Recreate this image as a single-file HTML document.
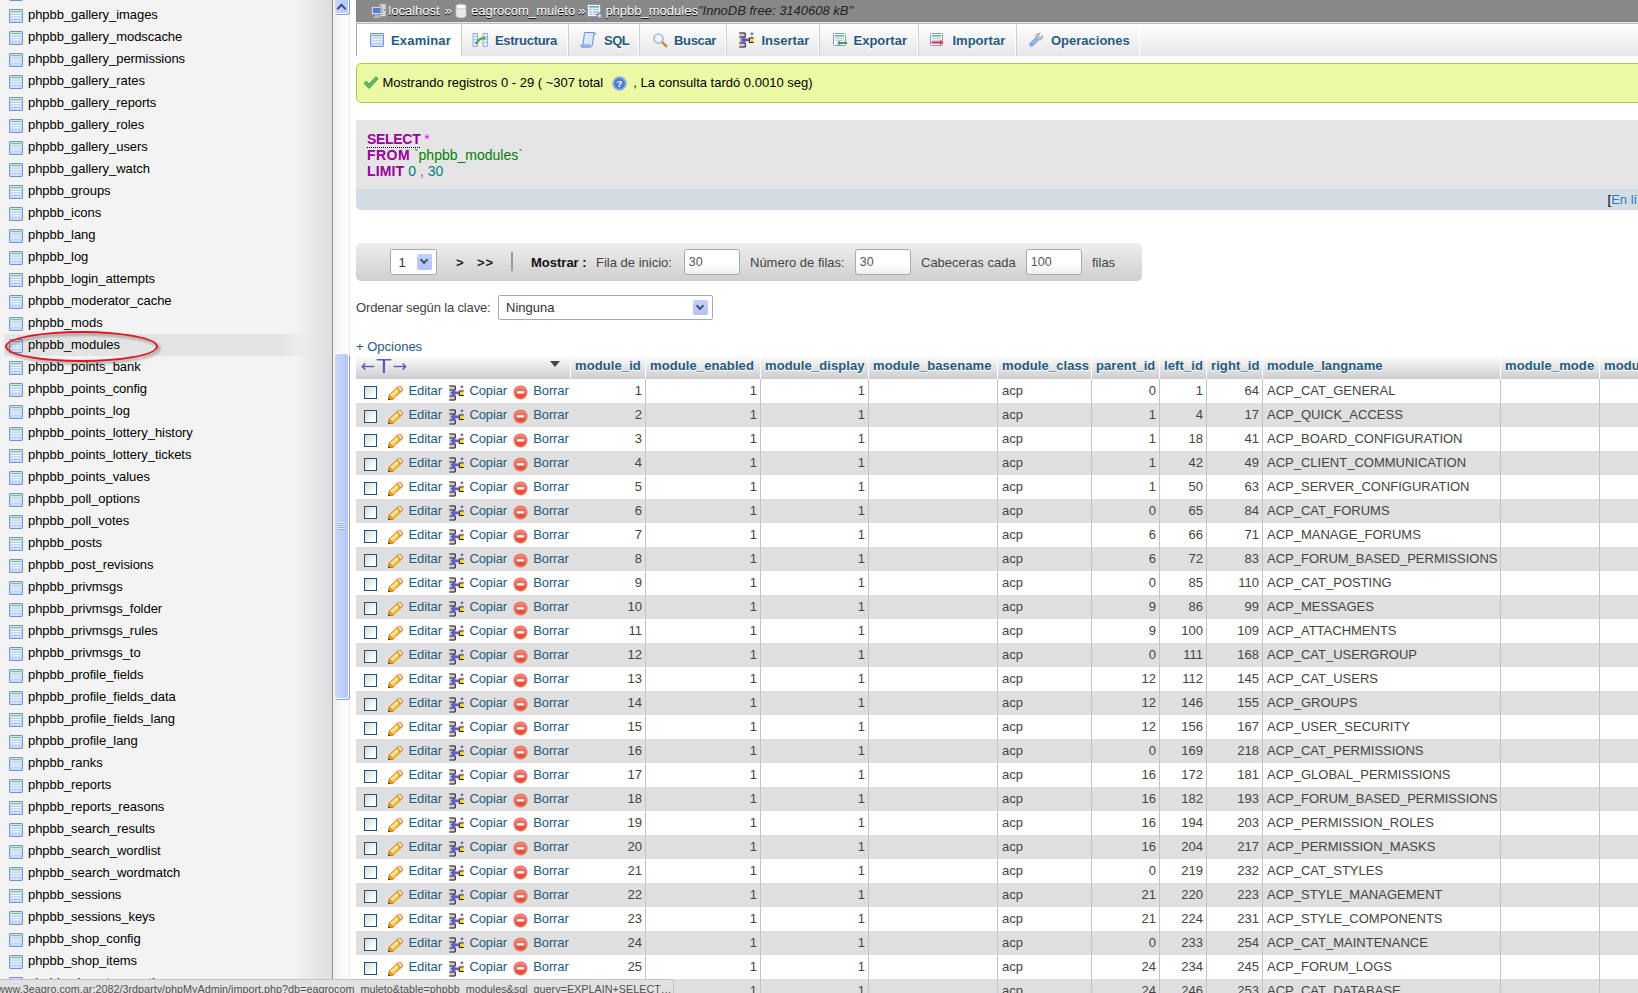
<!DOCTYPE html><html lang="es"><head><meta charset="utf-8"><title>phpMyAdmin</title><style>
*{box-sizing:border-box}
html,body{margin:0;padding:0}
body{width:1638px;height:993px;overflow:hidden;position:relative;background:#fff;font-family:"Liberation Sans",sans-serif;font-size:13px;color:#444;}
.ic{display:inline-block;vertical-align:middle}
/* left frame */
#left{position:absolute;left:0;top:0;width:332px;height:993px;background:#f3f3f3;overflow:hidden}
#left .grad{position:absolute;left:296px;top:0;width:36px;height:993px;background:linear-gradient(to right,#f3f3f3,#e6e7e8 50%,#dbddde)}
#left ul{list-style:none;margin:0;padding:0;position:absolute;left:0;top:-18px;width:332px}
#left li{height:22px;line-height:22px;padding-left:9px;letter-spacing:-.05px;white-space:nowrap;color:#000;position:relative}
#left li .ic{margin-right:5px;position:relative;top:.5px}
#left li.marked{background:linear-gradient(to right,rgba(228,228,228,0) 0,rgba(228,228,228,0) 4px,#e4e4e4 4px,#e4e4e4 280px,rgba(228,228,228,0) 316px)}
#left li span{position:relative;z-index:2}
#ellipse{position:absolute;left:4.500px;top:330.500px;width:153px;height:31px;border:2px solid #e8121c;border-radius:50%;filter:drop-shadow(2.500px 2.500px 1.500px rgba(0,0,0,.45));z-index:5}
#fborder{position:absolute;left:332px;top:0;width:1px;height:993px;background:#8f8f8f}
#sb{z-index:3;position:absolute;left:333px;top:0;width:16px;height:993px;background:linear-gradient(to right,#efede8,#fbfaf8 55%,#fff)}
#sb .up{position:absolute;left:1px;top:-4px;width:15px;height:18px;border:1px solid #fff;border-radius:3px;background:linear-gradient(to right,#c9d6fb,#b5c7f7);box-shadow:1px 1px 0 #7f9fdb}
#sb .up:after{content:"";position:absolute;left:3px;top:7.500px;width:5px;height:5px;border-left:2.400px solid #3f5078;border-top:2.400px solid #3f5078;transform:rotate(45deg)}
#sb .thumb{position:absolute;left:1px;top:353px;width:15px;height:346px;border-radius:3px;background:linear-gradient(to right,#c9d6fb,#c0d0fa 55%,#b3c6f7);border:1px solid #fff;box-shadow:1px 1px 0 #7f9fdb}
#sb .grip{position:absolute;left:5px;top:522px;width:7px;height:8px;background:repeating-linear-gradient(#eef3ff 0,#eef3ff 1px,#8fa8ee 1px,#8fa8ee 2px)}
#sbline{position:absolute;left:349px;top:0;width:1px;height:993px;background:#ececec}
/* main */
#main{position:absolute;left:350px;top:0;width:1288px;height:993px;overflow:hidden;background:#fff}
#crumb{position:absolute;left:6px;top:0;width:1290px;height:22px;background:#888;color:#fff;text-shadow:0 1px 0 #000;white-space:nowrap;line-height:22.500px;font-size:13px}
#crumb .c{position:absolute;top:0}
#crumb i{color:#222;text-shadow:none;font-style:italic}
#crumbline{position:absolute;left:6px;top:22px;width:1290px;height:1px;background:#e8e8e8}
#tabs{position:absolute;left:6px;top:23px;width:1290px;height:33px;background:linear-gradient(#fff,#e6e6e6);border-top:1px solid #bbb;white-space:nowrap}
.tab{position:absolute;top:0;height:32px;line-height:32px;border-right:1px solid #fff;border-left:1px solid #cfcfcf;font-weight:bold;color:#235a81;font-size:13px;text-shadow:0 1px 0 #fff}
.tab .ti{position:absolute;top:0;line-height:30px}.tab .tt{position:absolute;top:1px}
.tab.act{background:#fff;border-left:1px solid #aaa}
#ok{position:absolute;left:6px;top:63px;width:1300px;height:40px;background:#ebf8a4;border:1px solid #a2d246;border-radius:5px;line-height:38px;color:#000;padding-left:6px;white-space:nowrap}
#sqlbox{position:absolute;left:6px;top:120px;width:1300px;height:90px;background:#e5e5e5;border-radius:0 0 0 5px;overflow:hidden}
#sqlbox .code{position:absolute;left:11px;top:11px;line-height:16px;font-size:14px;white-space:pre}
#sqlbox .tools{position:absolute;left:0;top:69px;width:1300px;height:21px;background:#d3dce3}
.kw{color:#990099;font-weight:bold}.pu{color:#ff00ff}.qu{color:#008000}.di{color:#008080}
#navbar{position:absolute;left:6px;top:243px;width:786px;height:38px;border-radius:5px;background:linear-gradient(#eee,#cfcfcf);white-space:nowrap}
#navbar .t{position:absolute;top:1px;line-height:38px;color:#444}
.inp{position:absolute;top:6px;height:25.5px;border:1px solid #aaa;border-radius:3px;background:linear-gradient(#fff 55%,#f0f0f0);color:#555;line-height:25px;padding-left:4px;font-size:12.5px}
.sel{position:absolute;border:1px solid #aaa;border-radius:2px;background:#fff;color:#333;}
.sel .arr{position:absolute;right:4px;top:4px;bottom:4px;width:15px;border-radius:2px;background:linear-gradient(#c3d1fa,#b1c3f5)}
.sel .arr:after{content:"";position:absolute;left:4.300px;top:3px;width:4.200px;height:4.200px;border-right:2.300px solid #44567e;border-bottom:2.300px solid #44567e;transform:rotate(45deg)}
#ord{position:absolute;left:6px;top:294px;line-height:28px;white-space:nowrap;letter-spacing:-.15px}
#opc{position:absolute;left:6px;top:339px;color:#235a81;line-height:15px}
table{position:absolute;left:6px;top:355px;border-collapse:separate;border-spacing:0;table-layout:fixed;white-space:nowrap}
th{height:24px;background:linear-gradient(#fff,#cdcdcd);color:#235a81;font-weight:bold;font-size:13px;letter-spacing:.1px;text-align:left;padding:0 3px 4px 4px;border-right:1px solid #fff;border-left:0;overflow:hidden;text-shadow:0 1px 0 #fff}
.ar{position:absolute;font-weight:normal;color:#5560b6;letter-spacing:0;text-shadow:0 0 2px #fff,0 0 1px #fff}
td{height:24px;padding:0 3px 2px 4px;border-right:1px solid #c4c4c4;color:#444;overflow:hidden;vertical-align:middle}
td.act{border-right:0;padding:0;color:#235a81}
td.r{text-align:right}
tr.e td{background:#dfdfdf}
tr.o td{background:#fff}
.a{position:relative;height:24px;width:214px}
.a .p{position:absolute;line-height:0}
.a .x{position:absolute;top:0;line-height:23px;letter-spacing:-.1px}
.cb{position:absolute;left:8px;top:7px;width:13px;height:13px;border:1px solid #1c5180;background:linear-gradient(135deg,#d9d9d4,#fff 80%)}
td.act .ic{margin:0}
#status{position:absolute;left:0;top:979px;width:674px;height:14px;background:#e1e1e1;border-top:1px solid #c4c4c4;border-right:1px solid #c4c4c4;border-radius:0 4px 0 0;font-size:10.800px;line-height:19px;color:#505050;white-space:nowrap;overflow:hidden;z-index:20;text-indent:-3px}
</style></head><body>
<div id="left"><div class="grad"></div><ul>
<li><svg class="ic" width="14" height="14" viewBox="0 0 14 14"><rect x="0.700" y="0.700" width="12.600" height="12.600" rx=".8" fill="#fdfeff" stroke="#6a92d6" stroke-width="1.300"/><rect x="2.200" y="2.100" width="9.600" height="1.200" fill="#6fba6c"/><rect x="2.200" y="4.400" width="9.600" height="7.500" fill="#b7ccf0"/><path d="M2.200 6.500h9.600M2.200 8.900h9.600" stroke="#fff" stroke-width=".9"/><path d="M4.800 4.400v7.500M8.300 4.400v7.500" stroke="#eaf1fc" stroke-width=".7"/></svg><span>phpbb_gallery_favorites</span></li>
<li><svg class="ic" width="14" height="14" viewBox="0 0 14 14"><rect x="0.700" y="0.700" width="12.600" height="12.600" rx=".8" fill="#fdfeff" stroke="#6a92d6" stroke-width="1.300"/><rect x="2.200" y="2.100" width="9.600" height="1.200" fill="#6fba6c"/><rect x="2.200" y="4.400" width="9.600" height="7.500" fill="#b7ccf0"/><path d="M2.200 6.500h9.600M2.200 8.900h9.600" stroke="#fff" stroke-width=".9"/><path d="M4.800 4.400v7.500M8.300 4.400v7.500" stroke="#eaf1fc" stroke-width=".7"/></svg><span>phpbb_gallery_images</span></li>
<li><svg class="ic" width="14" height="14" viewBox="0 0 14 14"><rect x="0.700" y="0.700" width="12.600" height="12.600" rx=".8" fill="#fdfeff" stroke="#6a92d6" stroke-width="1.300"/><rect x="2.200" y="2.100" width="9.600" height="1.200" fill="#6fba6c"/><rect x="2.200" y="4.400" width="9.600" height="7.500" fill="#b7ccf0"/><path d="M2.200 6.500h9.600M2.200 8.900h9.600" stroke="#fff" stroke-width=".9"/><path d="M4.800 4.400v7.500M8.300 4.400v7.500" stroke="#eaf1fc" stroke-width=".7"/></svg><span>phpbb_gallery_modscache</span></li>
<li><svg class="ic" width="14" height="14" viewBox="0 0 14 14"><rect x="0.700" y="0.700" width="12.600" height="12.600" rx=".8" fill="#fdfeff" stroke="#6a92d6" stroke-width="1.300"/><rect x="2.200" y="2.100" width="9.600" height="1.200" fill="#6fba6c"/><rect x="2.200" y="4.400" width="9.600" height="7.500" fill="#b7ccf0"/><path d="M2.200 6.500h9.600M2.200 8.900h9.600" stroke="#fff" stroke-width=".9"/><path d="M4.800 4.400v7.500M8.300 4.400v7.500" stroke="#eaf1fc" stroke-width=".7"/></svg><span>phpbb_gallery_permissions</span></li>
<li><svg class="ic" width="14" height="14" viewBox="0 0 14 14"><rect x="0.700" y="0.700" width="12.600" height="12.600" rx=".8" fill="#fdfeff" stroke="#6a92d6" stroke-width="1.300"/><rect x="2.200" y="2.100" width="9.600" height="1.200" fill="#6fba6c"/><rect x="2.200" y="4.400" width="9.600" height="7.500" fill="#b7ccf0"/><path d="M2.200 6.500h9.600M2.200 8.900h9.600" stroke="#fff" stroke-width=".9"/><path d="M4.800 4.400v7.500M8.300 4.400v7.500" stroke="#eaf1fc" stroke-width=".7"/></svg><span>phpbb_gallery_rates</span></li>
<li><svg class="ic" width="14" height="14" viewBox="0 0 14 14"><rect x="0.700" y="0.700" width="12.600" height="12.600" rx=".8" fill="#fdfeff" stroke="#6a92d6" stroke-width="1.300"/><rect x="2.200" y="2.100" width="9.600" height="1.200" fill="#6fba6c"/><rect x="2.200" y="4.400" width="9.600" height="7.500" fill="#b7ccf0"/><path d="M2.200 6.500h9.600M2.200 8.900h9.600" stroke="#fff" stroke-width=".9"/><path d="M4.800 4.400v7.500M8.300 4.400v7.500" stroke="#eaf1fc" stroke-width=".7"/></svg><span>phpbb_gallery_reports</span></li>
<li><svg class="ic" width="14" height="14" viewBox="0 0 14 14"><rect x="0.700" y="0.700" width="12.600" height="12.600" rx=".8" fill="#fdfeff" stroke="#6a92d6" stroke-width="1.300"/><rect x="2.200" y="2.100" width="9.600" height="1.200" fill="#6fba6c"/><rect x="2.200" y="4.400" width="9.600" height="7.500" fill="#b7ccf0"/><path d="M2.200 6.500h9.600M2.200 8.900h9.600" stroke="#fff" stroke-width=".9"/><path d="M4.800 4.400v7.500M8.300 4.400v7.500" stroke="#eaf1fc" stroke-width=".7"/></svg><span>phpbb_gallery_roles</span></li>
<li><svg class="ic" width="14" height="14" viewBox="0 0 14 14"><rect x="0.700" y="0.700" width="12.600" height="12.600" rx=".8" fill="#fdfeff" stroke="#6a92d6" stroke-width="1.300"/><rect x="2.200" y="2.100" width="9.600" height="1.200" fill="#6fba6c"/><rect x="2.200" y="4.400" width="9.600" height="7.500" fill="#b7ccf0"/><path d="M2.200 6.500h9.600M2.200 8.900h9.600" stroke="#fff" stroke-width=".9"/><path d="M4.800 4.400v7.500M8.300 4.400v7.500" stroke="#eaf1fc" stroke-width=".7"/></svg><span>phpbb_gallery_users</span></li>
<li><svg class="ic" width="14" height="14" viewBox="0 0 14 14"><rect x="0.700" y="0.700" width="12.600" height="12.600" rx=".8" fill="#fdfeff" stroke="#6a92d6" stroke-width="1.300"/><rect x="2.200" y="2.100" width="9.600" height="1.200" fill="#6fba6c"/><rect x="2.200" y="4.400" width="9.600" height="7.500" fill="#b7ccf0"/><path d="M2.200 6.500h9.600M2.200 8.900h9.600" stroke="#fff" stroke-width=".9"/><path d="M4.800 4.400v7.500M8.300 4.400v7.500" stroke="#eaf1fc" stroke-width=".7"/></svg><span>phpbb_gallery_watch</span></li>
<li><svg class="ic" width="14" height="14" viewBox="0 0 14 14"><rect x="0.700" y="0.700" width="12.600" height="12.600" rx=".8" fill="#fdfeff" stroke="#6a92d6" stroke-width="1.300"/><rect x="2.200" y="2.100" width="9.600" height="1.200" fill="#6fba6c"/><rect x="2.200" y="4.400" width="9.600" height="7.500" fill="#b7ccf0"/><path d="M2.200 6.500h9.600M2.200 8.900h9.600" stroke="#fff" stroke-width=".9"/><path d="M4.800 4.400v7.500M8.300 4.400v7.500" stroke="#eaf1fc" stroke-width=".7"/></svg><span>phpbb_groups</span></li>
<li><svg class="ic" width="14" height="14" viewBox="0 0 14 14"><rect x="0.700" y="0.700" width="12.600" height="12.600" rx=".8" fill="#fdfeff" stroke="#6a92d6" stroke-width="1.300"/><rect x="2.200" y="2.100" width="9.600" height="1.200" fill="#6fba6c"/><rect x="2.200" y="4.400" width="9.600" height="7.500" fill="#b7ccf0"/><path d="M2.200 6.500h9.600M2.200 8.900h9.600" stroke="#fff" stroke-width=".9"/><path d="M4.800 4.400v7.500M8.300 4.400v7.500" stroke="#eaf1fc" stroke-width=".7"/></svg><span>phpbb_icons</span></li>
<li><svg class="ic" width="14" height="14" viewBox="0 0 14 14"><rect x="0.700" y="0.700" width="12.600" height="12.600" rx=".8" fill="#fdfeff" stroke="#6a92d6" stroke-width="1.300"/><rect x="2.200" y="2.100" width="9.600" height="1.200" fill="#6fba6c"/><rect x="2.200" y="4.400" width="9.600" height="7.500" fill="#b7ccf0"/><path d="M2.200 6.500h9.600M2.200 8.900h9.600" stroke="#fff" stroke-width=".9"/><path d="M4.800 4.400v7.500M8.300 4.400v7.500" stroke="#eaf1fc" stroke-width=".7"/></svg><span>phpbb_lang</span></li>
<li><svg class="ic" width="14" height="14" viewBox="0 0 14 14"><rect x="0.700" y="0.700" width="12.600" height="12.600" rx=".8" fill="#fdfeff" stroke="#6a92d6" stroke-width="1.300"/><rect x="2.200" y="2.100" width="9.600" height="1.200" fill="#6fba6c"/><rect x="2.200" y="4.400" width="9.600" height="7.500" fill="#b7ccf0"/><path d="M2.200 6.500h9.600M2.200 8.900h9.600" stroke="#fff" stroke-width=".9"/><path d="M4.800 4.400v7.500M8.300 4.400v7.500" stroke="#eaf1fc" stroke-width=".7"/></svg><span>phpbb_log</span></li>
<li><svg class="ic" width="14" height="14" viewBox="0 0 14 14"><rect x="0.700" y="0.700" width="12.600" height="12.600" rx=".8" fill="#fdfeff" stroke="#6a92d6" stroke-width="1.300"/><rect x="2.200" y="2.100" width="9.600" height="1.200" fill="#6fba6c"/><rect x="2.200" y="4.400" width="9.600" height="7.500" fill="#b7ccf0"/><path d="M2.200 6.500h9.600M2.200 8.900h9.600" stroke="#fff" stroke-width=".9"/><path d="M4.800 4.400v7.500M8.300 4.400v7.500" stroke="#eaf1fc" stroke-width=".7"/></svg><span>phpbb_login_attempts</span></li>
<li><svg class="ic" width="14" height="14" viewBox="0 0 14 14"><rect x="0.700" y="0.700" width="12.600" height="12.600" rx=".8" fill="#fdfeff" stroke="#6a92d6" stroke-width="1.300"/><rect x="2.200" y="2.100" width="9.600" height="1.200" fill="#6fba6c"/><rect x="2.200" y="4.400" width="9.600" height="7.500" fill="#b7ccf0"/><path d="M2.200 6.500h9.600M2.200 8.900h9.600" stroke="#fff" stroke-width=".9"/><path d="M4.800 4.400v7.500M8.300 4.400v7.500" stroke="#eaf1fc" stroke-width=".7"/></svg><span>phpbb_moderator_cache</span></li>
<li><svg class="ic" width="14" height="14" viewBox="0 0 14 14"><rect x="0.700" y="0.700" width="12.600" height="12.600" rx=".8" fill="#fdfeff" stroke="#6a92d6" stroke-width="1.300"/><rect x="2.200" y="2.100" width="9.600" height="1.200" fill="#6fba6c"/><rect x="2.200" y="4.400" width="9.600" height="7.500" fill="#b7ccf0"/><path d="M2.200 6.500h9.600M2.200 8.900h9.600" stroke="#fff" stroke-width=".9"/><path d="M4.800 4.400v7.500M8.300 4.400v7.500" stroke="#eaf1fc" stroke-width=".7"/></svg><span>phpbb_mods</span></li>
<li class="marked"><svg class="ic" width="14" height="14" viewBox="0 0 14 14"><rect x="0.700" y="0.700" width="12.600" height="12.600" rx=".8" fill="#fdfeff" stroke="#6a92d6" stroke-width="1.300"/><rect x="2.200" y="2.100" width="9.600" height="1.200" fill="#6fba6c"/><rect x="2.200" y="4.400" width="9.600" height="7.500" fill="#b7ccf0"/><path d="M2.200 6.500h9.600M2.200 8.900h9.600" stroke="#fff" stroke-width=".9"/><path d="M4.800 4.400v7.500M8.300 4.400v7.500" stroke="#eaf1fc" stroke-width=".7"/></svg><span>phpbb_modules</span></li>
<li><svg class="ic" width="14" height="14" viewBox="0 0 14 14"><rect x="0.700" y="0.700" width="12.600" height="12.600" rx=".8" fill="#fdfeff" stroke="#6a92d6" stroke-width="1.300"/><rect x="2.200" y="2.100" width="9.600" height="1.200" fill="#6fba6c"/><rect x="2.200" y="4.400" width="9.600" height="7.500" fill="#b7ccf0"/><path d="M2.200 6.500h9.600M2.200 8.900h9.600" stroke="#fff" stroke-width=".9"/><path d="M4.800 4.400v7.500M8.300 4.400v7.500" stroke="#eaf1fc" stroke-width=".7"/></svg><span>phpbb_points_bank</span></li>
<li><svg class="ic" width="14" height="14" viewBox="0 0 14 14"><rect x="0.700" y="0.700" width="12.600" height="12.600" rx=".8" fill="#fdfeff" stroke="#6a92d6" stroke-width="1.300"/><rect x="2.200" y="2.100" width="9.600" height="1.200" fill="#6fba6c"/><rect x="2.200" y="4.400" width="9.600" height="7.500" fill="#b7ccf0"/><path d="M2.200 6.500h9.600M2.200 8.900h9.600" stroke="#fff" stroke-width=".9"/><path d="M4.800 4.400v7.500M8.300 4.400v7.500" stroke="#eaf1fc" stroke-width=".7"/></svg><span>phpbb_points_config</span></li>
<li><svg class="ic" width="14" height="14" viewBox="0 0 14 14"><rect x="0.700" y="0.700" width="12.600" height="12.600" rx=".8" fill="#fdfeff" stroke="#6a92d6" stroke-width="1.300"/><rect x="2.200" y="2.100" width="9.600" height="1.200" fill="#6fba6c"/><rect x="2.200" y="4.400" width="9.600" height="7.500" fill="#b7ccf0"/><path d="M2.200 6.500h9.600M2.200 8.900h9.600" stroke="#fff" stroke-width=".9"/><path d="M4.800 4.400v7.500M8.300 4.400v7.500" stroke="#eaf1fc" stroke-width=".7"/></svg><span>phpbb_points_log</span></li>
<li><svg class="ic" width="14" height="14" viewBox="0 0 14 14"><rect x="0.700" y="0.700" width="12.600" height="12.600" rx=".8" fill="#fdfeff" stroke="#6a92d6" stroke-width="1.300"/><rect x="2.200" y="2.100" width="9.600" height="1.200" fill="#6fba6c"/><rect x="2.200" y="4.400" width="9.600" height="7.500" fill="#b7ccf0"/><path d="M2.200 6.500h9.600M2.200 8.900h9.600" stroke="#fff" stroke-width=".9"/><path d="M4.800 4.400v7.500M8.300 4.400v7.500" stroke="#eaf1fc" stroke-width=".7"/></svg><span>phpbb_points_lottery_history</span></li>
<li><svg class="ic" width="14" height="14" viewBox="0 0 14 14"><rect x="0.700" y="0.700" width="12.600" height="12.600" rx=".8" fill="#fdfeff" stroke="#6a92d6" stroke-width="1.300"/><rect x="2.200" y="2.100" width="9.600" height="1.200" fill="#6fba6c"/><rect x="2.200" y="4.400" width="9.600" height="7.500" fill="#b7ccf0"/><path d="M2.200 6.500h9.600M2.200 8.900h9.600" stroke="#fff" stroke-width=".9"/><path d="M4.800 4.400v7.500M8.300 4.400v7.500" stroke="#eaf1fc" stroke-width=".7"/></svg><span>phpbb_points_lottery_tickets</span></li>
<li><svg class="ic" width="14" height="14" viewBox="0 0 14 14"><rect x="0.700" y="0.700" width="12.600" height="12.600" rx=".8" fill="#fdfeff" stroke="#6a92d6" stroke-width="1.300"/><rect x="2.200" y="2.100" width="9.600" height="1.200" fill="#6fba6c"/><rect x="2.200" y="4.400" width="9.600" height="7.500" fill="#b7ccf0"/><path d="M2.200 6.500h9.600M2.200 8.900h9.600" stroke="#fff" stroke-width=".9"/><path d="M4.800 4.400v7.500M8.300 4.400v7.500" stroke="#eaf1fc" stroke-width=".7"/></svg><span>phpbb_points_values</span></li>
<li><svg class="ic" width="14" height="14" viewBox="0 0 14 14"><rect x="0.700" y="0.700" width="12.600" height="12.600" rx=".8" fill="#fdfeff" stroke="#6a92d6" stroke-width="1.300"/><rect x="2.200" y="2.100" width="9.600" height="1.200" fill="#6fba6c"/><rect x="2.200" y="4.400" width="9.600" height="7.500" fill="#b7ccf0"/><path d="M2.200 6.500h9.600M2.200 8.900h9.600" stroke="#fff" stroke-width=".9"/><path d="M4.800 4.400v7.500M8.300 4.400v7.500" stroke="#eaf1fc" stroke-width=".7"/></svg><span>phpbb_poll_options</span></li>
<li><svg class="ic" width="14" height="14" viewBox="0 0 14 14"><rect x="0.700" y="0.700" width="12.600" height="12.600" rx=".8" fill="#fdfeff" stroke="#6a92d6" stroke-width="1.300"/><rect x="2.200" y="2.100" width="9.600" height="1.200" fill="#6fba6c"/><rect x="2.200" y="4.400" width="9.600" height="7.500" fill="#b7ccf0"/><path d="M2.200 6.500h9.600M2.200 8.900h9.600" stroke="#fff" stroke-width=".9"/><path d="M4.800 4.400v7.500M8.300 4.400v7.500" stroke="#eaf1fc" stroke-width=".7"/></svg><span>phpbb_poll_votes</span></li>
<li><svg class="ic" width="14" height="14" viewBox="0 0 14 14"><rect x="0.700" y="0.700" width="12.600" height="12.600" rx=".8" fill="#fdfeff" stroke="#6a92d6" stroke-width="1.300"/><rect x="2.200" y="2.100" width="9.600" height="1.200" fill="#6fba6c"/><rect x="2.200" y="4.400" width="9.600" height="7.500" fill="#b7ccf0"/><path d="M2.200 6.500h9.600M2.200 8.900h9.600" stroke="#fff" stroke-width=".9"/><path d="M4.800 4.400v7.500M8.300 4.400v7.500" stroke="#eaf1fc" stroke-width=".7"/></svg><span>phpbb_posts</span></li>
<li><svg class="ic" width="14" height="14" viewBox="0 0 14 14"><rect x="0.700" y="0.700" width="12.600" height="12.600" rx=".8" fill="#fdfeff" stroke="#6a92d6" stroke-width="1.300"/><rect x="2.200" y="2.100" width="9.600" height="1.200" fill="#6fba6c"/><rect x="2.200" y="4.400" width="9.600" height="7.500" fill="#b7ccf0"/><path d="M2.200 6.500h9.600M2.200 8.900h9.600" stroke="#fff" stroke-width=".9"/><path d="M4.800 4.400v7.500M8.300 4.400v7.500" stroke="#eaf1fc" stroke-width=".7"/></svg><span>phpbb_post_revisions</span></li>
<li><svg class="ic" width="14" height="14" viewBox="0 0 14 14"><rect x="0.700" y="0.700" width="12.600" height="12.600" rx=".8" fill="#fdfeff" stroke="#6a92d6" stroke-width="1.300"/><rect x="2.200" y="2.100" width="9.600" height="1.200" fill="#6fba6c"/><rect x="2.200" y="4.400" width="9.600" height="7.500" fill="#b7ccf0"/><path d="M2.200 6.500h9.600M2.200 8.900h9.600" stroke="#fff" stroke-width=".9"/><path d="M4.800 4.400v7.500M8.300 4.400v7.500" stroke="#eaf1fc" stroke-width=".7"/></svg><span>phpbb_privmsgs</span></li>
<li><svg class="ic" width="14" height="14" viewBox="0 0 14 14"><rect x="0.700" y="0.700" width="12.600" height="12.600" rx=".8" fill="#fdfeff" stroke="#6a92d6" stroke-width="1.300"/><rect x="2.200" y="2.100" width="9.600" height="1.200" fill="#6fba6c"/><rect x="2.200" y="4.400" width="9.600" height="7.500" fill="#b7ccf0"/><path d="M2.200 6.500h9.600M2.200 8.900h9.600" stroke="#fff" stroke-width=".9"/><path d="M4.800 4.400v7.500M8.300 4.400v7.500" stroke="#eaf1fc" stroke-width=".7"/></svg><span>phpbb_privmsgs_folder</span></li>
<li><svg class="ic" width="14" height="14" viewBox="0 0 14 14"><rect x="0.700" y="0.700" width="12.600" height="12.600" rx=".8" fill="#fdfeff" stroke="#6a92d6" stroke-width="1.300"/><rect x="2.200" y="2.100" width="9.600" height="1.200" fill="#6fba6c"/><rect x="2.200" y="4.400" width="9.600" height="7.500" fill="#b7ccf0"/><path d="M2.200 6.500h9.600M2.200 8.900h9.600" stroke="#fff" stroke-width=".9"/><path d="M4.800 4.400v7.500M8.300 4.400v7.500" stroke="#eaf1fc" stroke-width=".7"/></svg><span>phpbb_privmsgs_rules</span></li>
<li><svg class="ic" width="14" height="14" viewBox="0 0 14 14"><rect x="0.700" y="0.700" width="12.600" height="12.600" rx=".8" fill="#fdfeff" stroke="#6a92d6" stroke-width="1.300"/><rect x="2.200" y="2.100" width="9.600" height="1.200" fill="#6fba6c"/><rect x="2.200" y="4.400" width="9.600" height="7.500" fill="#b7ccf0"/><path d="M2.200 6.500h9.600M2.200 8.900h9.600" stroke="#fff" stroke-width=".9"/><path d="M4.800 4.400v7.500M8.300 4.400v7.500" stroke="#eaf1fc" stroke-width=".7"/></svg><span>phpbb_privmsgs_to</span></li>
<li><svg class="ic" width="14" height="14" viewBox="0 0 14 14"><rect x="0.700" y="0.700" width="12.600" height="12.600" rx=".8" fill="#fdfeff" stroke="#6a92d6" stroke-width="1.300"/><rect x="2.200" y="2.100" width="9.600" height="1.200" fill="#6fba6c"/><rect x="2.200" y="4.400" width="9.600" height="7.500" fill="#b7ccf0"/><path d="M2.200 6.500h9.600M2.200 8.900h9.600" stroke="#fff" stroke-width=".9"/><path d="M4.800 4.400v7.500M8.300 4.400v7.500" stroke="#eaf1fc" stroke-width=".7"/></svg><span>phpbb_profile_fields</span></li>
<li><svg class="ic" width="14" height="14" viewBox="0 0 14 14"><rect x="0.700" y="0.700" width="12.600" height="12.600" rx=".8" fill="#fdfeff" stroke="#6a92d6" stroke-width="1.300"/><rect x="2.200" y="2.100" width="9.600" height="1.200" fill="#6fba6c"/><rect x="2.200" y="4.400" width="9.600" height="7.500" fill="#b7ccf0"/><path d="M2.200 6.500h9.600M2.200 8.900h9.600" stroke="#fff" stroke-width=".9"/><path d="M4.800 4.400v7.500M8.300 4.400v7.500" stroke="#eaf1fc" stroke-width=".7"/></svg><span>phpbb_profile_fields_data</span></li>
<li><svg class="ic" width="14" height="14" viewBox="0 0 14 14"><rect x="0.700" y="0.700" width="12.600" height="12.600" rx=".8" fill="#fdfeff" stroke="#6a92d6" stroke-width="1.300"/><rect x="2.200" y="2.100" width="9.600" height="1.200" fill="#6fba6c"/><rect x="2.200" y="4.400" width="9.600" height="7.500" fill="#b7ccf0"/><path d="M2.200 6.500h9.600M2.200 8.900h9.600" stroke="#fff" stroke-width=".9"/><path d="M4.800 4.400v7.500M8.300 4.400v7.500" stroke="#eaf1fc" stroke-width=".7"/></svg><span>phpbb_profile_fields_lang</span></li>
<li><svg class="ic" width="14" height="14" viewBox="0 0 14 14"><rect x="0.700" y="0.700" width="12.600" height="12.600" rx=".8" fill="#fdfeff" stroke="#6a92d6" stroke-width="1.300"/><rect x="2.200" y="2.100" width="9.600" height="1.200" fill="#6fba6c"/><rect x="2.200" y="4.400" width="9.600" height="7.500" fill="#b7ccf0"/><path d="M2.200 6.500h9.600M2.200 8.900h9.600" stroke="#fff" stroke-width=".9"/><path d="M4.800 4.400v7.500M8.300 4.400v7.500" stroke="#eaf1fc" stroke-width=".7"/></svg><span>phpbb_profile_lang</span></li>
<li><svg class="ic" width="14" height="14" viewBox="0 0 14 14"><rect x="0.700" y="0.700" width="12.600" height="12.600" rx=".8" fill="#fdfeff" stroke="#6a92d6" stroke-width="1.300"/><rect x="2.200" y="2.100" width="9.600" height="1.200" fill="#6fba6c"/><rect x="2.200" y="4.400" width="9.600" height="7.500" fill="#b7ccf0"/><path d="M2.200 6.500h9.600M2.200 8.900h9.600" stroke="#fff" stroke-width=".9"/><path d="M4.800 4.400v7.500M8.300 4.400v7.500" stroke="#eaf1fc" stroke-width=".7"/></svg><span>phpbb_ranks</span></li>
<li><svg class="ic" width="14" height="14" viewBox="0 0 14 14"><rect x="0.700" y="0.700" width="12.600" height="12.600" rx=".8" fill="#fdfeff" stroke="#6a92d6" stroke-width="1.300"/><rect x="2.200" y="2.100" width="9.600" height="1.200" fill="#6fba6c"/><rect x="2.200" y="4.400" width="9.600" height="7.500" fill="#b7ccf0"/><path d="M2.200 6.500h9.600M2.200 8.900h9.600" stroke="#fff" stroke-width=".9"/><path d="M4.800 4.400v7.500M8.300 4.400v7.500" stroke="#eaf1fc" stroke-width=".7"/></svg><span>phpbb_reports</span></li>
<li><svg class="ic" width="14" height="14" viewBox="0 0 14 14"><rect x="0.700" y="0.700" width="12.600" height="12.600" rx=".8" fill="#fdfeff" stroke="#6a92d6" stroke-width="1.300"/><rect x="2.200" y="2.100" width="9.600" height="1.200" fill="#6fba6c"/><rect x="2.200" y="4.400" width="9.600" height="7.500" fill="#b7ccf0"/><path d="M2.200 6.500h9.600M2.200 8.900h9.600" stroke="#fff" stroke-width=".9"/><path d="M4.800 4.400v7.500M8.300 4.400v7.500" stroke="#eaf1fc" stroke-width=".7"/></svg><span>phpbb_reports_reasons</span></li>
<li><svg class="ic" width="14" height="14" viewBox="0 0 14 14"><rect x="0.700" y="0.700" width="12.600" height="12.600" rx=".8" fill="#fdfeff" stroke="#6a92d6" stroke-width="1.300"/><rect x="2.200" y="2.100" width="9.600" height="1.200" fill="#6fba6c"/><rect x="2.200" y="4.400" width="9.600" height="7.500" fill="#b7ccf0"/><path d="M2.200 6.500h9.600M2.200 8.900h9.600" stroke="#fff" stroke-width=".9"/><path d="M4.800 4.400v7.500M8.300 4.400v7.500" stroke="#eaf1fc" stroke-width=".7"/></svg><span>phpbb_search_results</span></li>
<li><svg class="ic" width="14" height="14" viewBox="0 0 14 14"><rect x="0.700" y="0.700" width="12.600" height="12.600" rx=".8" fill="#fdfeff" stroke="#6a92d6" stroke-width="1.300"/><rect x="2.200" y="2.100" width="9.600" height="1.200" fill="#6fba6c"/><rect x="2.200" y="4.400" width="9.600" height="7.500" fill="#b7ccf0"/><path d="M2.200 6.500h9.600M2.200 8.900h9.600" stroke="#fff" stroke-width=".9"/><path d="M4.800 4.400v7.500M8.300 4.400v7.500" stroke="#eaf1fc" stroke-width=".7"/></svg><span>phpbb_search_wordlist</span></li>
<li><svg class="ic" width="14" height="14" viewBox="0 0 14 14"><rect x="0.700" y="0.700" width="12.600" height="12.600" rx=".8" fill="#fdfeff" stroke="#6a92d6" stroke-width="1.300"/><rect x="2.200" y="2.100" width="9.600" height="1.200" fill="#6fba6c"/><rect x="2.200" y="4.400" width="9.600" height="7.500" fill="#b7ccf0"/><path d="M2.200 6.500h9.600M2.200 8.900h9.600" stroke="#fff" stroke-width=".9"/><path d="M4.800 4.400v7.500M8.300 4.400v7.500" stroke="#eaf1fc" stroke-width=".7"/></svg><span>phpbb_search_wordmatch</span></li>
<li><svg class="ic" width="14" height="14" viewBox="0 0 14 14"><rect x="0.700" y="0.700" width="12.600" height="12.600" rx=".8" fill="#fdfeff" stroke="#6a92d6" stroke-width="1.300"/><rect x="2.200" y="2.100" width="9.600" height="1.200" fill="#6fba6c"/><rect x="2.200" y="4.400" width="9.600" height="7.500" fill="#b7ccf0"/><path d="M2.200 6.500h9.600M2.200 8.900h9.600" stroke="#fff" stroke-width=".9"/><path d="M4.800 4.400v7.500M8.300 4.400v7.500" stroke="#eaf1fc" stroke-width=".7"/></svg><span>phpbb_sessions</span></li>
<li><svg class="ic" width="14" height="14" viewBox="0 0 14 14"><rect x="0.700" y="0.700" width="12.600" height="12.600" rx=".8" fill="#fdfeff" stroke="#6a92d6" stroke-width="1.300"/><rect x="2.200" y="2.100" width="9.600" height="1.200" fill="#6fba6c"/><rect x="2.200" y="4.400" width="9.600" height="7.500" fill="#b7ccf0"/><path d="M2.200 6.500h9.600M2.200 8.900h9.600" stroke="#fff" stroke-width=".9"/><path d="M4.800 4.400v7.500M8.300 4.400v7.500" stroke="#eaf1fc" stroke-width=".7"/></svg><span>phpbb_sessions_keys</span></li>
<li><svg class="ic" width="14" height="14" viewBox="0 0 14 14"><rect x="0.700" y="0.700" width="12.600" height="12.600" rx=".8" fill="#fdfeff" stroke="#6a92d6" stroke-width="1.300"/><rect x="2.200" y="2.100" width="9.600" height="1.200" fill="#6fba6c"/><rect x="2.200" y="4.400" width="9.600" height="7.500" fill="#b7ccf0"/><path d="M2.200 6.500h9.600M2.200 8.900h9.600" stroke="#fff" stroke-width=".9"/><path d="M4.800 4.400v7.500M8.300 4.400v7.500" stroke="#eaf1fc" stroke-width=".7"/></svg><span>phpbb_shop_config</span></li>
<li><svg class="ic" width="14" height="14" viewBox="0 0 14 14"><rect x="0.700" y="0.700" width="12.600" height="12.600" rx=".8" fill="#fdfeff" stroke="#6a92d6" stroke-width="1.300"/><rect x="2.200" y="2.100" width="9.600" height="1.200" fill="#6fba6c"/><rect x="2.200" y="4.400" width="9.600" height="7.500" fill="#b7ccf0"/><path d="M2.200 6.500h9.600M2.200 8.900h9.600" stroke="#fff" stroke-width=".9"/><path d="M4.800 4.400v7.500M8.300 4.400v7.500" stroke="#eaf1fc" stroke-width=".7"/></svg><span>phpbb_shop_items</span></li>
<li><svg class="ic" width="14" height="14" viewBox="0 0 14 14"><rect x="0.700" y="0.700" width="12.600" height="12.600" rx=".8" fill="#fdfeff" stroke="#6a92d6" stroke-width="1.300"/><rect x="2.200" y="2.100" width="9.600" height="1.200" fill="#6fba6c"/><rect x="2.200" y="4.400" width="9.600" height="7.500" fill="#b7ccf0"/><path d="M2.200 6.500h9.600M2.200 8.900h9.600" stroke="#fff" stroke-width=".9"/><path d="M4.800 4.400v7.500M8.300 4.400v7.500" stroke="#eaf1fc" stroke-width=".7"/></svg><span>phpbb_shop_transactions</span></li>
</ul><div id="ellipse"></div></div>
<div id="fborder"></div><div id="sb"><div class="up"></div><div class="thumb"></div><div class="grip"></div></div><div id="sbline"></div>
<div id="main">
<div id="crumb"><span class="c" style="left:14px;top:1px;line-height:18px"><svg class="ic" width="18" height="16" viewBox="0 0 18 16"><rect x="9.5" y="1" width="6.5" height="12.5" fill="#d9d9d9" stroke="#9a9a9a" stroke-width=".8"/><rect x="14" y="6" width="1.4" height="1.6" fill="#4caf50"/><rect x="1.5" y="3.5" width="10.5" height="8" rx=".8" fill="#e8e8e8" stroke="#8d8d8d" stroke-width=".9"/><rect x="2.8" y="4.8" width="7.9" height="5.3" fill="#4f7fd6"/><rect x="5" y="12" width="3.6" height="1.6" fill="#bbb"/><rect x="3.4" y="13.6" width="6.8" height="1.2" fill="#ccc"/></svg></span><span class="c" style="left:32.30000000000001px;">localhost</span><span class="c" style="left:88.5px;">»</span><span class="c" style="left:98px;top:1px;line-height:18px"><svg class="ic" width="14" height="16" viewBox="0 0 14 16"><path d="M2 3.5v9c0 1.4 2.2 2.4 5 2.4s5-1 5-2.4v-9z" fill="#e9e9e9" stroke="#bdbdbd" stroke-width=".8"/><ellipse cx="7" cy="3.5" rx="5" ry="2.3" fill="#fafafa" stroke="#c6c6c6" stroke-width=".8"/></svg></span><span class="c" style="left:115.10000000000002px;">eagrocom_muleto</span><span class="c" style="left:222.20000000000005px;">»</span><span class="c" style="left:230.5px;top:2px;line-height:18px"><svg class="ic" width="17" height="16" viewBox="0 0 17 16"><rect x="0.5" y="0.5" width="13" height="12" rx="1" fill="#fff" stroke="#7c9bd6"/><rect x="2" y="2" width="10" height="1.6" fill="#6fb06b"/><g fill="#a9c1ea"><rect x="2" y="4.6" width="3" height="1.6"/><rect x="5.6" y="4.6" width="6.4" height="1.6"/><rect x="2" y="7.1" width="3" height="1.6"/><rect x="5.6" y="7.1" width="6.4" height="1.6"/><rect x="2" y="9.6" width="3" height="1.4"/><rect x="5.6" y="9.6" width="6.4" height="1.4"/></g><circle cx="12.5" cy="11.8" r="3" fill="#aaa" stroke="#777" stroke-width=".8"/><circle cx="12.5" cy="11.8" r="1.1" fill="#eee"/></svg></span><span class="c" style="left:249.39999999999998px;">phpbb_modules<i>"InnoDB free: 3140608 kB"</i></span></div><div id="crumbline"></div>
<div id="tabs">
<div class="tab act" style="left:0px;width:105px"><span class="ti" style="left:13px"><svg class="ic" width="14" height="14" viewBox="0 0 14 14"><rect x="0.700" y="0.700" width="12.600" height="12.600" rx=".8" fill="#fdfeff" stroke="#6a92d6" stroke-width="1.300"/><rect x="2.200" y="2.100" width="9.600" height="1.200" fill="#6fba6c"/><rect x="2.200" y="4.400" width="9.600" height="7.500" fill="#b7ccf0"/><path d="M2.200 6.500h9.600M2.200 8.900h9.600" stroke="#fff" stroke-width=".9"/><path d="M4.800 4.400v7.500M8.300 4.400v7.500" stroke="#eaf1fc" stroke-width=".7"/></svg></span><span class="tt" style="left:34px;letter-spacing:0.18px">Examinar</span></div>
<div class="tab" style="left:105px;width:107px"><span class="ti" style="left:10px"><svg class="ic" width="16" height="16" viewBox="0 0 16 16"><rect x="1" y="1.500" width="4.500" height="13" fill="#e4eefc" stroke="#7da0dc" stroke-width=".8"/><rect x="11" y="1.500" width="4.500" height="13" fill="#e4eefc" stroke="#7da0dc" stroke-width=".8"/><path d="M1.500 4.500h3.500M1.500 7.500h3.500M1.500 10.500h3.500M11.500 4.500h3.500M11.500 7.500h3.500M11.500 10.500h3.500" stroke="#9db9e8" stroke-width=".8"/><path d="M4.200 11.200L8.200 6.800L12.500 6" stroke="#55a548" stroke-width="2.300" fill="none" stroke-linejoin="round" stroke-linecap="round"/></svg></span><span class="tt" style="left:33px;letter-spacing:-0.3px">Estructura</span></div>
<div class="tab" style="left:212px;width:71px"><span class="ti" style="left:11px"><svg class="ic" width="17" height="17" viewBox="0 0 17 17"><path d="M4.500 1.500h9.500c1.500 0 2 1.200 1.200 2.200-.5.600-1.300.600-1.700.500l-1 9.500c-.2 1.500-1 2.300-2.300 2.300H2c-1.200 0-1.600-1.300-.8-2 .5-.5 1.300-.6 1.800-.4z" fill="#dbe7fb" stroke="#6c90d4" stroke-width="1" stroke-linejoin="round"/><path d="M1.300 15c.3-1.200 1.300-1.500 2-1.200h7.200c-.2 1.200.2 1.900-.5 2.200H2.200c-.5 0-.8-.4-.9-1z" fill="#a9c3f2" stroke="#6c90d4" stroke-width=".7"/><path d="M13.500 4.200c-.3-.8 0-2 1-2.500" fill="none" stroke="#6c90d4" stroke-width=".8"/></svg></span><span class="tt" style="left:35px;letter-spacing:-0.5px">SQL</span></div>
<div class="tab" style="left:283px;width:87px"><span class="ti" style="left:12px"><svg class="ic" width="16" height="16" viewBox="0 0 16 16"><path d="M9.6 9.6l4.6 4.6" stroke="#c88a34" stroke-width="2.6" stroke-linecap="round"/><circle cx="6.5" cy="6.5" r="4.6" fill="#dcebfb" stroke="#9fb6cf" stroke-width="1.4"/><circle cx="6.5" cy="6.5" r="3" fill="#eef6ff"/></svg></span><span class="tt" style="left:34px;letter-spacing:-0.35px">Buscar</span></div>
<div class="tab" style="left:370px;width:93px"><span class="ti" style="left:12px"><svg class="ic" width="15" height="16" viewBox="0 0 15 16"><rect x="0.300" y="0.500" width="5.700" height="15" fill="#cdcdcd"/><path d="M0.300 1h6v4.200M0.300 5h5.700M0.300 15h6v-4.200M0.300 11h5.700" stroke="#1a1a1a" stroke-width="1" fill="none"/><path d="M1.400 7.900L6.300 3.300V6.500H9.800V9.300H6.300V12.500z" fill="#6358d2"/><rect x="10.800" y="5.900" width="3.900" height="4.600" fill="#ffd32c"/><path d="M14.700 5.900h-4.400v4.600h4.400" stroke="#1a1a1a" stroke-width="1" fill="none"/><path d="M12.900 0.200v3.200M11.300 1.800h3.200" stroke="#5a5ad8" stroke-width="1.100"/></svg></span><span class="tt" style="left:34.5px;letter-spacing:0px">Insertar</span></div>
<div class="tab" style="left:463px;width:99px"><span class="ti" style="left:11.5px"><svg class="ic" width="16" height="16" viewBox="0 0 16 16"><rect x="1.5" y="1.5" width="12" height="12" rx="1" fill="#fff" stroke="#7c9bd6"/><rect x="3" y="3" width="9" height="1.5" fill="#6fb06b"/><g fill="#b7cbee"><rect x="3" y="5.4" width="9" height="1.3"/><rect x="3" y="7.6" width="9" height="1.3"/></g><path d="M15 11H6.5" stroke="#4aa04a" stroke-width="2"/><path d="M8.2 8.2L5 11l3.2 2.8z" fill="#4aa04a"/></svg></span><span class="tt" style="left:33.5px;letter-spacing:0px">Exportar</span></div>
<div class="tab" style="left:562px;width:98px"><span class="ti" style="left:10px"><svg class="ic" width="16" height="16" viewBox="0 0 16 16"><rect x="1.5" y="1.5" width="12" height="12" rx="1" fill="#fff" stroke="#7c9bd6"/><rect x="3" y="3" width="9" height="1.5" fill="#6fb06b"/><g fill="#b7cbee"><rect x="3" y="5.4" width="9" height="1.3"/><rect x="3" y="7.6" width="9" height="1.3"/></g><path d="M2.5 10.5h9" stroke="#e5372e" stroke-width="2.2"/><path d="M11 7.8l3.6 2.7L11 13.2z" fill="#e5372e"/></svg></span><span class="tt" style="left:33.5px;letter-spacing:0px">Importar</span></div>
<div class="tab" style="left:660px;width:124px"><span class="ti" style="left:11px"><svg class="ic" width="16" height="16" viewBox="0 0 16 16"><path d="M2.2 13.8c-.8-.8-.8-1.8 0-2.6l5.6-5.6 2.6 2.6-5.6 5.6c-.8.8-1.8.8-2.6 0z" fill="#8fb0ea" stroke="#6f94d6" stroke-width=".8"/><path d="M8 5.4c-.6-1.6.2-3.4 2-4 1-.3 1.8-.1 2.4.2l-2 2 .4 1.6 1.6.4 2-2c.5 1 .4 2.4-.6 3.4-1 1-2.400 1.200-3.600.6z" fill="#c9c9c9" stroke="#9a9a9a" stroke-width=".8"/></svg></span><span class="tt" style="left:34px;letter-spacing:0px">Operaciones</span></div>
</div>
<div id="ok"><span style="position:absolute;left:5.500px;top:11.500px;line-height:0"><svg class="ic" width="16" height="14" viewBox="0 0 16 14"><path d="M1 7.300l2.300-2.100 2.700 2.800L12.800 0.800l2.200 2-8.900 9.700z" fill="#62b863" stroke="#3f9a47" stroke-width=".9" stroke-linejoin="round"/></svg></span><span style="position:absolute;left:25.400px;top:0">Mostrando registros 0 - 29 ( ~307 total</span><span style="position:absolute;left:255.400px;top:12px;line-height:0"><svg class="ic" width="15" height="15" viewBox="0 0 15 15"><circle cx="7.500" cy="7.500" r="7" fill="#7fa3e0" stroke="#b5caee" stroke-width=".8"/><circle cx="7.500" cy="7.500" r="5.300" fill="#4f7fcc"/><text x="7.500" y="11" text-anchor="middle" font-family="Liberation Sans, sans-serif" font-weight="bold" font-size="9.500" fill="#fff">?</text></svg></span><span style="position:absolute;left:276.300px;top:0">, La consulta tardó 0.0010 seg)</span></div>
<div id="sqlbox"><div class="code"><span class="kw" style="border-bottom:1px dotted #000;letter-spacing:-.3px">SELECT</span> <span class="pu">*</span>
<span class="kw" style="letter-spacing:.45px">FROM</span> <span class="qu">`phpbb_modules`</span>
<span class="kw" style="letter-spacing:.15px">LIMIT</span> <span class="di">0</span> <span class="pu">,</span> <span class="di">30</span></div><div class="tools"><span style="position:absolute;left:1251.500px;top:0;line-height:21px;color:#000;white-space:nowrap">[<span style="color:#2e7cbc">En línea</span>]</span></div></div>
<div id="navbar">
<div class="sel" style="left:34px;top:6px;width:46.500px;height:25.500px;line-height:25px;padding-left:7.500px">1<span class="arr"></span></div>
<span class="t" style="left:100px;font-weight:bold;color:#222">&gt;</span><span class="t" style="left:121px;font-weight:bold;color:#222;letter-spacing:1px">&gt;&gt;</span>
<span style="position:absolute;left:155px;top:9px;width:2px;height:19px;background:#999"></span>
<span class="t" style="left:175px;font-weight:bold;color:#111">Mostrar :</span>
<span class="t" style="left:240px">Fila de inicio:</span><div class="inp" style="left:327.8px;width:56px">30</div>
<span class="t" style="left:394px">Número de filas:</span><div class="inp" style="left:498.8px;width:56px">30</div>
<span class="t" style="left:565px">Cabeceras cada</span><div class="inp" style="left:669.8px;width:56px">100</div>
<span class="t" style="left:736px">filas</span>
</div>
<div id="ord">Ordenar según la clave:<div class="sel" style="left:142px;top:.5px;width:215px;height:25.5px;line-height:24px;padding-left:7px;letter-spacing:0">Ninguna<span class="arr"></span></div></div>
<div id="opc">+ Opciones</div>
<table style="width:1304px"><colgroup><col style="width:215px"><col style="width:75px"><col style="width:115px"><col style="width:108px"><col style="width:129px"><col style="width:94px"><col style="width:68px"><col style="width:47px"><col style="width:56px"><col style="width:238px"><col style="width:99px"><col style="width:60px"></colgroup>
<tr><th style="padding:0;position:relative"><span class="ar" style="left:4.500px;top:0;font-size:17.500px;line-height:22px;font-family:'DejaVu Sans',sans-serif">←</span><span class="ar" style="left:20px;top:-1px;font-size:20px;line-height:24px;transform:scaleX(1.3);transform-origin:0 0">T</span><span class="ar" style="left:36.500px;top:0;font-size:17.500px;line-height:22px;font-family:'DejaVu Sans',sans-serif">→</span><span style="position:absolute;left:194px;top:6px;width:0;height:0;border-left:5.500px solid transparent;border-right:5.500px solid transparent;border-top:6.500px solid #444"></span></th><th>module_id</th><th>module_enabled</th><th>module_display</th><th>module_basename</th><th>module_class</th><th>parent_id</th><th>left_id</th><th>right_id</th><th>module_langname</th><th>module_mode</th><th>module_auth</th></tr>
<tr class="o"><td class="act"><div class="a"><span class="cb"></span><span class="p" style="left:31px;top:6.500px"><svg class="ic" width="16" height="15" viewBox="0 0 16 15"><g transform="rotate(-43 8 7.5) translate(8 7.5) scale(1.07 1) translate(-8 -7.5)"><path d="M-0.5 7.5l3.6-2.7v5.400z" fill="#eec48a" stroke="#b5641c" stroke-width=".9" stroke-linejoin="round"/><path d="M-0.5 7.5l1.500-1.100v2.200z" fill="#4a2c0c"/><rect x="3.1" y="4.800" width="9.600" height="5.400" fill="#f8d345" stroke="#d4861c" stroke-width=".9"/><rect x="3.600" y="5.600" width="8.800" height="1.700" fill="#fff2a0"/><path d="M12.700 4.800h2.200a1.200 1.200 0 0 1 1.200 1.200v3a1.200 1.200 0 0 1-1.200 1.200h-2.200z" fill="#f6d6c4" stroke="#d4861c" stroke-width=".9"/></g></svg></span><span class="x" style="left:52.5px">Editar</span><span class="p" style="left:92.5px;top:6px"><svg class="ic" width="15" height="16" viewBox="0 0 15 16"><rect x="0.300" y="0.500" width="5.700" height="15" fill="#cdcdcd"/><path d="M0.300 1h6v4.200M0.300 5h5.700M0.300 15h6v-4.200M0.300 11h5.700" stroke="#1a1a1a" stroke-width="1" fill="none"/><path d="M1.400 7.900L6.300 3.300V6.500H9.800V9.300H6.300V12.500z" fill="#6358d2"/><rect x="10.800" y="5.900" width="3.900" height="4.600" fill="#ffd32c"/><path d="M14.700 5.900h-4.400v4.600h4.400" stroke="#1a1a1a" stroke-width="1" fill="none"/><path d="M12.900 0.200v3.200M11.300 1.800h3.200" stroke="#5a5ad8" stroke-width="1.100"/></svg></span><span class="x" style="left:113.4px">Copiar</span><span class="p" style="left:156.5px;top:6px"><svg class="ic" width="15" height="15" viewBox="0 0 15 15"><defs><linearGradient id="rg" x1="0" y1="0" x2="0" y2="1"><stop offset="0" stop-color="#f08474"/><stop offset="1" stop-color="#dc3c2c"/></linearGradient></defs><circle cx="7.500" cy="7.500" r="7" fill="#e4584a"/><circle cx="7.500" cy="7.500" r="5.900" fill="url(#rg)" stroke="#f6b3a8" stroke-width=".6"/><rect x="3.900" y="6.300" width="7.200" height="2.300" rx=".5" fill="#fff"/></svg></span><span class="x" style="left:177.2px">Borrar</span></div></td><td class="r">1</td><td class="r">1</td><td class="r">1</td><td></td><td>acp</td><td class="r">0</td><td class="r">1</td><td class="r">64</td><td>ACP_CAT_GENERAL</td><td></td><td></td></tr>
<tr class="e"><td class="act"><div class="a"><span class="cb"></span><span class="p" style="left:31px;top:6.500px"><svg class="ic" width="16" height="15" viewBox="0 0 16 15"><g transform="rotate(-43 8 7.5) translate(8 7.5) scale(1.07 1) translate(-8 -7.5)"><path d="M-0.5 7.5l3.6-2.7v5.400z" fill="#eec48a" stroke="#b5641c" stroke-width=".9" stroke-linejoin="round"/><path d="M-0.5 7.5l1.500-1.100v2.200z" fill="#4a2c0c"/><rect x="3.1" y="4.800" width="9.600" height="5.400" fill="#f8d345" stroke="#d4861c" stroke-width=".9"/><rect x="3.600" y="5.600" width="8.800" height="1.700" fill="#fff2a0"/><path d="M12.700 4.800h2.200a1.200 1.200 0 0 1 1.200 1.200v3a1.200 1.200 0 0 1-1.200 1.200h-2.200z" fill="#f6d6c4" stroke="#d4861c" stroke-width=".9"/></g></svg></span><span class="x" style="left:52.5px">Editar</span><span class="p" style="left:92.5px;top:6px"><svg class="ic" width="15" height="16" viewBox="0 0 15 16"><rect x="0.300" y="0.500" width="5.700" height="15" fill="#cdcdcd"/><path d="M0.300 1h6v4.200M0.300 5h5.700M0.300 15h6v-4.200M0.300 11h5.700" stroke="#1a1a1a" stroke-width="1" fill="none"/><path d="M1.400 7.900L6.300 3.300V6.500H9.800V9.300H6.300V12.500z" fill="#6358d2"/><rect x="10.800" y="5.900" width="3.900" height="4.600" fill="#ffd32c"/><path d="M14.700 5.900h-4.400v4.600h4.400" stroke="#1a1a1a" stroke-width="1" fill="none"/><path d="M12.900 0.200v3.200M11.300 1.800h3.200" stroke="#5a5ad8" stroke-width="1.100"/></svg></span><span class="x" style="left:113.4px">Copiar</span><span class="p" style="left:156.5px;top:6px"><svg class="ic" width="15" height="15" viewBox="0 0 15 15"><circle cx="7.500" cy="7.500" r="7" fill="#e4584a"/><circle cx="7.500" cy="7.500" r="5.900" fill="url(#rg)" stroke="#f6b3a8" stroke-width=".6"/><rect x="3.900" y="6.300" width="7.200" height="2.300" rx=".5" fill="#fff"/></svg></span><span class="x" style="left:177.2px">Borrar</span></div></td><td class="r">2</td><td class="r">1</td><td class="r">1</td><td></td><td>acp</td><td class="r">1</td><td class="r">4</td><td class="r">17</td><td>ACP_QUICK_ACCESS</td><td></td><td></td></tr>
<tr class="o"><td class="act"><div class="a"><span class="cb"></span><span class="p" style="left:31px;top:6.500px"><svg class="ic" width="16" height="15" viewBox="0 0 16 15"><g transform="rotate(-43 8 7.5) translate(8 7.5) scale(1.07 1) translate(-8 -7.5)"><path d="M-0.5 7.5l3.6-2.7v5.400z" fill="#eec48a" stroke="#b5641c" stroke-width=".9" stroke-linejoin="round"/><path d="M-0.5 7.5l1.500-1.100v2.200z" fill="#4a2c0c"/><rect x="3.1" y="4.800" width="9.600" height="5.400" fill="#f8d345" stroke="#d4861c" stroke-width=".9"/><rect x="3.600" y="5.600" width="8.800" height="1.700" fill="#fff2a0"/><path d="M12.700 4.800h2.200a1.200 1.200 0 0 1 1.200 1.200v3a1.200 1.200 0 0 1-1.200 1.200h-2.200z" fill="#f6d6c4" stroke="#d4861c" stroke-width=".9"/></g></svg></span><span class="x" style="left:52.5px">Editar</span><span class="p" style="left:92.5px;top:6px"><svg class="ic" width="15" height="16" viewBox="0 0 15 16"><rect x="0.300" y="0.500" width="5.700" height="15" fill="#cdcdcd"/><path d="M0.300 1h6v4.200M0.300 5h5.700M0.300 15h6v-4.200M0.300 11h5.700" stroke="#1a1a1a" stroke-width="1" fill="none"/><path d="M1.400 7.900L6.300 3.300V6.500H9.800V9.300H6.300V12.500z" fill="#6358d2"/><rect x="10.800" y="5.900" width="3.900" height="4.600" fill="#ffd32c"/><path d="M14.700 5.900h-4.400v4.600h4.400" stroke="#1a1a1a" stroke-width="1" fill="none"/><path d="M12.900 0.200v3.200M11.300 1.800h3.200" stroke="#5a5ad8" stroke-width="1.100"/></svg></span><span class="x" style="left:113.4px">Copiar</span><span class="p" style="left:156.5px;top:6px"><svg class="ic" width="15" height="15" viewBox="0 0 15 15"><circle cx="7.500" cy="7.500" r="7" fill="#e4584a"/><circle cx="7.500" cy="7.500" r="5.900" fill="url(#rg)" stroke="#f6b3a8" stroke-width=".6"/><rect x="3.900" y="6.300" width="7.200" height="2.300" rx=".5" fill="#fff"/></svg></span><span class="x" style="left:177.2px">Borrar</span></div></td><td class="r">3</td><td class="r">1</td><td class="r">1</td><td></td><td>acp</td><td class="r">1</td><td class="r">18</td><td class="r">41</td><td>ACP_BOARD_CONFIGURATION</td><td></td><td></td></tr>
<tr class="e"><td class="act"><div class="a"><span class="cb"></span><span class="p" style="left:31px;top:6.500px"><svg class="ic" width="16" height="15" viewBox="0 0 16 15"><g transform="rotate(-43 8 7.5) translate(8 7.5) scale(1.07 1) translate(-8 -7.5)"><path d="M-0.5 7.5l3.6-2.7v5.400z" fill="#eec48a" stroke="#b5641c" stroke-width=".9" stroke-linejoin="round"/><path d="M-0.5 7.5l1.500-1.100v2.200z" fill="#4a2c0c"/><rect x="3.1" y="4.800" width="9.600" height="5.400" fill="#f8d345" stroke="#d4861c" stroke-width=".9"/><rect x="3.600" y="5.600" width="8.800" height="1.700" fill="#fff2a0"/><path d="M12.700 4.800h2.200a1.200 1.200 0 0 1 1.200 1.200v3a1.200 1.200 0 0 1-1.200 1.200h-2.200z" fill="#f6d6c4" stroke="#d4861c" stroke-width=".9"/></g></svg></span><span class="x" style="left:52.5px">Editar</span><span class="p" style="left:92.5px;top:6px"><svg class="ic" width="15" height="16" viewBox="0 0 15 16"><rect x="0.300" y="0.500" width="5.700" height="15" fill="#cdcdcd"/><path d="M0.300 1h6v4.200M0.300 5h5.700M0.300 15h6v-4.200M0.300 11h5.700" stroke="#1a1a1a" stroke-width="1" fill="none"/><path d="M1.400 7.900L6.300 3.300V6.500H9.800V9.300H6.300V12.500z" fill="#6358d2"/><rect x="10.800" y="5.900" width="3.900" height="4.600" fill="#ffd32c"/><path d="M14.700 5.900h-4.400v4.600h4.400" stroke="#1a1a1a" stroke-width="1" fill="none"/><path d="M12.900 0.200v3.200M11.300 1.800h3.200" stroke="#5a5ad8" stroke-width="1.100"/></svg></span><span class="x" style="left:113.4px">Copiar</span><span class="p" style="left:156.5px;top:6px"><svg class="ic" width="15" height="15" viewBox="0 0 15 15"><circle cx="7.500" cy="7.500" r="7" fill="#e4584a"/><circle cx="7.500" cy="7.500" r="5.900" fill="url(#rg)" stroke="#f6b3a8" stroke-width=".6"/><rect x="3.900" y="6.300" width="7.200" height="2.300" rx=".5" fill="#fff"/></svg></span><span class="x" style="left:177.2px">Borrar</span></div></td><td class="r">4</td><td class="r">1</td><td class="r">1</td><td></td><td>acp</td><td class="r">1</td><td class="r">42</td><td class="r">49</td><td>ACP_CLIENT_COMMUNICATION</td><td></td><td></td></tr>
<tr class="o"><td class="act"><div class="a"><span class="cb"></span><span class="p" style="left:31px;top:6.500px"><svg class="ic" width="16" height="15" viewBox="0 0 16 15"><g transform="rotate(-43 8 7.5) translate(8 7.5) scale(1.07 1) translate(-8 -7.5)"><path d="M-0.5 7.5l3.6-2.7v5.400z" fill="#eec48a" stroke="#b5641c" stroke-width=".9" stroke-linejoin="round"/><path d="M-0.5 7.5l1.500-1.100v2.200z" fill="#4a2c0c"/><rect x="3.1" y="4.800" width="9.600" height="5.400" fill="#f8d345" stroke="#d4861c" stroke-width=".9"/><rect x="3.600" y="5.600" width="8.800" height="1.700" fill="#fff2a0"/><path d="M12.700 4.800h2.200a1.200 1.200 0 0 1 1.200 1.200v3a1.200 1.200 0 0 1-1.200 1.200h-2.200z" fill="#f6d6c4" stroke="#d4861c" stroke-width=".9"/></g></svg></span><span class="x" style="left:52.5px">Editar</span><span class="p" style="left:92.5px;top:6px"><svg class="ic" width="15" height="16" viewBox="0 0 15 16"><rect x="0.300" y="0.500" width="5.700" height="15" fill="#cdcdcd"/><path d="M0.300 1h6v4.200M0.300 5h5.700M0.300 15h6v-4.200M0.300 11h5.700" stroke="#1a1a1a" stroke-width="1" fill="none"/><path d="M1.400 7.900L6.300 3.300V6.500H9.800V9.300H6.300V12.500z" fill="#6358d2"/><rect x="10.800" y="5.900" width="3.900" height="4.600" fill="#ffd32c"/><path d="M14.700 5.900h-4.400v4.600h4.400" stroke="#1a1a1a" stroke-width="1" fill="none"/><path d="M12.900 0.200v3.200M11.300 1.800h3.200" stroke="#5a5ad8" stroke-width="1.100"/></svg></span><span class="x" style="left:113.4px">Copiar</span><span class="p" style="left:156.5px;top:6px"><svg class="ic" width="15" height="15" viewBox="0 0 15 15"><circle cx="7.500" cy="7.500" r="7" fill="#e4584a"/><circle cx="7.500" cy="7.500" r="5.900" fill="url(#rg)" stroke="#f6b3a8" stroke-width=".6"/><rect x="3.900" y="6.300" width="7.200" height="2.300" rx=".5" fill="#fff"/></svg></span><span class="x" style="left:177.2px">Borrar</span></div></td><td class="r">5</td><td class="r">1</td><td class="r">1</td><td></td><td>acp</td><td class="r">1</td><td class="r">50</td><td class="r">63</td><td>ACP_SERVER_CONFIGURATION</td><td></td><td></td></tr>
<tr class="e"><td class="act"><div class="a"><span class="cb"></span><span class="p" style="left:31px;top:6.500px"><svg class="ic" width="16" height="15" viewBox="0 0 16 15"><g transform="rotate(-43 8 7.5) translate(8 7.5) scale(1.07 1) translate(-8 -7.5)"><path d="M-0.5 7.5l3.6-2.7v5.400z" fill="#eec48a" stroke="#b5641c" stroke-width=".9" stroke-linejoin="round"/><path d="M-0.5 7.5l1.500-1.100v2.200z" fill="#4a2c0c"/><rect x="3.1" y="4.800" width="9.600" height="5.400" fill="#f8d345" stroke="#d4861c" stroke-width=".9"/><rect x="3.600" y="5.600" width="8.800" height="1.700" fill="#fff2a0"/><path d="M12.700 4.800h2.200a1.200 1.200 0 0 1 1.200 1.200v3a1.200 1.200 0 0 1-1.200 1.200h-2.200z" fill="#f6d6c4" stroke="#d4861c" stroke-width=".9"/></g></svg></span><span class="x" style="left:52.5px">Editar</span><span class="p" style="left:92.5px;top:6px"><svg class="ic" width="15" height="16" viewBox="0 0 15 16"><rect x="0.300" y="0.500" width="5.700" height="15" fill="#cdcdcd"/><path d="M0.300 1h6v4.200M0.300 5h5.700M0.300 15h6v-4.200M0.300 11h5.700" stroke="#1a1a1a" stroke-width="1" fill="none"/><path d="M1.400 7.900L6.300 3.300V6.500H9.800V9.300H6.300V12.500z" fill="#6358d2"/><rect x="10.800" y="5.900" width="3.900" height="4.600" fill="#ffd32c"/><path d="M14.700 5.900h-4.400v4.600h4.400" stroke="#1a1a1a" stroke-width="1" fill="none"/><path d="M12.900 0.200v3.200M11.300 1.800h3.200" stroke="#5a5ad8" stroke-width="1.100"/></svg></span><span class="x" style="left:113.4px">Copiar</span><span class="p" style="left:156.5px;top:6px"><svg class="ic" width="15" height="15" viewBox="0 0 15 15"><circle cx="7.500" cy="7.500" r="7" fill="#e4584a"/><circle cx="7.500" cy="7.500" r="5.900" fill="url(#rg)" stroke="#f6b3a8" stroke-width=".6"/><rect x="3.900" y="6.300" width="7.200" height="2.300" rx=".5" fill="#fff"/></svg></span><span class="x" style="left:177.2px">Borrar</span></div></td><td class="r">6</td><td class="r">1</td><td class="r">1</td><td></td><td>acp</td><td class="r">0</td><td class="r">65</td><td class="r">84</td><td>ACP_CAT_FORUMS</td><td></td><td></td></tr>
<tr class="o"><td class="act"><div class="a"><span class="cb"></span><span class="p" style="left:31px;top:6.500px"><svg class="ic" width="16" height="15" viewBox="0 0 16 15"><g transform="rotate(-43 8 7.5) translate(8 7.5) scale(1.07 1) translate(-8 -7.5)"><path d="M-0.5 7.5l3.6-2.7v5.400z" fill="#eec48a" stroke="#b5641c" stroke-width=".9" stroke-linejoin="round"/><path d="M-0.5 7.5l1.500-1.100v2.200z" fill="#4a2c0c"/><rect x="3.1" y="4.800" width="9.600" height="5.400" fill="#f8d345" stroke="#d4861c" stroke-width=".9"/><rect x="3.600" y="5.600" width="8.800" height="1.700" fill="#fff2a0"/><path d="M12.700 4.800h2.200a1.200 1.200 0 0 1 1.200 1.200v3a1.200 1.200 0 0 1-1.200 1.200h-2.200z" fill="#f6d6c4" stroke="#d4861c" stroke-width=".9"/></g></svg></span><span class="x" style="left:52.5px">Editar</span><span class="p" style="left:92.5px;top:6px"><svg class="ic" width="15" height="16" viewBox="0 0 15 16"><rect x="0.300" y="0.500" width="5.700" height="15" fill="#cdcdcd"/><path d="M0.300 1h6v4.200M0.300 5h5.700M0.300 15h6v-4.200M0.300 11h5.700" stroke="#1a1a1a" stroke-width="1" fill="none"/><path d="M1.400 7.900L6.300 3.300V6.500H9.800V9.300H6.300V12.500z" fill="#6358d2"/><rect x="10.800" y="5.900" width="3.900" height="4.600" fill="#ffd32c"/><path d="M14.700 5.900h-4.400v4.600h4.400" stroke="#1a1a1a" stroke-width="1" fill="none"/><path d="M12.900 0.200v3.200M11.300 1.800h3.200" stroke="#5a5ad8" stroke-width="1.100"/></svg></span><span class="x" style="left:113.4px">Copiar</span><span class="p" style="left:156.5px;top:6px"><svg class="ic" width="15" height="15" viewBox="0 0 15 15"><circle cx="7.500" cy="7.500" r="7" fill="#e4584a"/><circle cx="7.500" cy="7.500" r="5.900" fill="url(#rg)" stroke="#f6b3a8" stroke-width=".6"/><rect x="3.900" y="6.300" width="7.200" height="2.300" rx=".5" fill="#fff"/></svg></span><span class="x" style="left:177.2px">Borrar</span></div></td><td class="r">7</td><td class="r">1</td><td class="r">1</td><td></td><td>acp</td><td class="r">6</td><td class="r">66</td><td class="r">71</td><td>ACP_MANAGE_FORUMS</td><td></td><td></td></tr>
<tr class="e"><td class="act"><div class="a"><span class="cb"></span><span class="p" style="left:31px;top:6.500px"><svg class="ic" width="16" height="15" viewBox="0 0 16 15"><g transform="rotate(-43 8 7.5) translate(8 7.5) scale(1.07 1) translate(-8 -7.5)"><path d="M-0.5 7.5l3.6-2.7v5.400z" fill="#eec48a" stroke="#b5641c" stroke-width=".9" stroke-linejoin="round"/><path d="M-0.5 7.5l1.500-1.100v2.200z" fill="#4a2c0c"/><rect x="3.1" y="4.800" width="9.600" height="5.400" fill="#f8d345" stroke="#d4861c" stroke-width=".9"/><rect x="3.600" y="5.600" width="8.800" height="1.700" fill="#fff2a0"/><path d="M12.700 4.800h2.200a1.200 1.200 0 0 1 1.200 1.200v3a1.200 1.200 0 0 1-1.200 1.200h-2.200z" fill="#f6d6c4" stroke="#d4861c" stroke-width=".9"/></g></svg></span><span class="x" style="left:52.5px">Editar</span><span class="p" style="left:92.5px;top:6px"><svg class="ic" width="15" height="16" viewBox="0 0 15 16"><rect x="0.300" y="0.500" width="5.700" height="15" fill="#cdcdcd"/><path d="M0.300 1h6v4.200M0.300 5h5.700M0.300 15h6v-4.200M0.300 11h5.700" stroke="#1a1a1a" stroke-width="1" fill="none"/><path d="M1.400 7.900L6.300 3.300V6.500H9.800V9.300H6.300V12.500z" fill="#6358d2"/><rect x="10.800" y="5.900" width="3.900" height="4.600" fill="#ffd32c"/><path d="M14.700 5.900h-4.400v4.600h4.400" stroke="#1a1a1a" stroke-width="1" fill="none"/><path d="M12.900 0.200v3.200M11.300 1.800h3.200" stroke="#5a5ad8" stroke-width="1.100"/></svg></span><span class="x" style="left:113.4px">Copiar</span><span class="p" style="left:156.5px;top:6px"><svg class="ic" width="15" height="15" viewBox="0 0 15 15"><circle cx="7.500" cy="7.500" r="7" fill="#e4584a"/><circle cx="7.500" cy="7.500" r="5.900" fill="url(#rg)" stroke="#f6b3a8" stroke-width=".6"/><rect x="3.900" y="6.300" width="7.200" height="2.300" rx=".5" fill="#fff"/></svg></span><span class="x" style="left:177.2px">Borrar</span></div></td><td class="r">8</td><td class="r">1</td><td class="r">1</td><td></td><td>acp</td><td class="r">6</td><td class="r">72</td><td class="r">83</td><td>ACP_FORUM_BASED_PERMISSIONS</td><td></td><td></td></tr>
<tr class="o"><td class="act"><div class="a"><span class="cb"></span><span class="p" style="left:31px;top:6.500px"><svg class="ic" width="16" height="15" viewBox="0 0 16 15"><g transform="rotate(-43 8 7.5) translate(8 7.5) scale(1.07 1) translate(-8 -7.5)"><path d="M-0.5 7.5l3.6-2.7v5.400z" fill="#eec48a" stroke="#b5641c" stroke-width=".9" stroke-linejoin="round"/><path d="M-0.5 7.5l1.500-1.100v2.200z" fill="#4a2c0c"/><rect x="3.1" y="4.800" width="9.600" height="5.400" fill="#f8d345" stroke="#d4861c" stroke-width=".9"/><rect x="3.600" y="5.600" width="8.800" height="1.700" fill="#fff2a0"/><path d="M12.700 4.800h2.200a1.200 1.200 0 0 1 1.200 1.200v3a1.200 1.200 0 0 1-1.200 1.200h-2.200z" fill="#f6d6c4" stroke="#d4861c" stroke-width=".9"/></g></svg></span><span class="x" style="left:52.5px">Editar</span><span class="p" style="left:92.5px;top:6px"><svg class="ic" width="15" height="16" viewBox="0 0 15 16"><rect x="0.300" y="0.500" width="5.700" height="15" fill="#cdcdcd"/><path d="M0.300 1h6v4.200M0.300 5h5.700M0.300 15h6v-4.200M0.300 11h5.700" stroke="#1a1a1a" stroke-width="1" fill="none"/><path d="M1.400 7.900L6.300 3.300V6.500H9.800V9.300H6.300V12.500z" fill="#6358d2"/><rect x="10.800" y="5.900" width="3.900" height="4.600" fill="#ffd32c"/><path d="M14.700 5.900h-4.400v4.600h4.400" stroke="#1a1a1a" stroke-width="1" fill="none"/><path d="M12.900 0.200v3.200M11.300 1.800h3.200" stroke="#5a5ad8" stroke-width="1.100"/></svg></span><span class="x" style="left:113.4px">Copiar</span><span class="p" style="left:156.5px;top:6px"><svg class="ic" width="15" height="15" viewBox="0 0 15 15"><circle cx="7.500" cy="7.500" r="7" fill="#e4584a"/><circle cx="7.500" cy="7.500" r="5.900" fill="url(#rg)" stroke="#f6b3a8" stroke-width=".6"/><rect x="3.900" y="6.300" width="7.200" height="2.300" rx=".5" fill="#fff"/></svg></span><span class="x" style="left:177.2px">Borrar</span></div></td><td class="r">9</td><td class="r">1</td><td class="r">1</td><td></td><td>acp</td><td class="r">0</td><td class="r">85</td><td class="r">110</td><td>ACP_CAT_POSTING</td><td></td><td></td></tr>
<tr class="e"><td class="act"><div class="a"><span class="cb"></span><span class="p" style="left:31px;top:6.500px"><svg class="ic" width="16" height="15" viewBox="0 0 16 15"><g transform="rotate(-43 8 7.5) translate(8 7.5) scale(1.07 1) translate(-8 -7.5)"><path d="M-0.5 7.5l3.6-2.7v5.400z" fill="#eec48a" stroke="#b5641c" stroke-width=".9" stroke-linejoin="round"/><path d="M-0.5 7.5l1.500-1.100v2.200z" fill="#4a2c0c"/><rect x="3.1" y="4.800" width="9.600" height="5.400" fill="#f8d345" stroke="#d4861c" stroke-width=".9"/><rect x="3.600" y="5.600" width="8.800" height="1.700" fill="#fff2a0"/><path d="M12.700 4.800h2.200a1.200 1.200 0 0 1 1.200 1.200v3a1.200 1.200 0 0 1-1.200 1.200h-2.200z" fill="#f6d6c4" stroke="#d4861c" stroke-width=".9"/></g></svg></span><span class="x" style="left:52.5px">Editar</span><span class="p" style="left:92.5px;top:6px"><svg class="ic" width="15" height="16" viewBox="0 0 15 16"><rect x="0.300" y="0.500" width="5.700" height="15" fill="#cdcdcd"/><path d="M0.300 1h6v4.200M0.300 5h5.700M0.300 15h6v-4.200M0.300 11h5.700" stroke="#1a1a1a" stroke-width="1" fill="none"/><path d="M1.400 7.900L6.300 3.300V6.500H9.800V9.300H6.300V12.500z" fill="#6358d2"/><rect x="10.800" y="5.900" width="3.900" height="4.600" fill="#ffd32c"/><path d="M14.700 5.900h-4.400v4.600h4.400" stroke="#1a1a1a" stroke-width="1" fill="none"/><path d="M12.900 0.200v3.200M11.300 1.800h3.200" stroke="#5a5ad8" stroke-width="1.100"/></svg></span><span class="x" style="left:113.4px">Copiar</span><span class="p" style="left:156.5px;top:6px"><svg class="ic" width="15" height="15" viewBox="0 0 15 15"><circle cx="7.500" cy="7.500" r="7" fill="#e4584a"/><circle cx="7.500" cy="7.500" r="5.900" fill="url(#rg)" stroke="#f6b3a8" stroke-width=".6"/><rect x="3.900" y="6.300" width="7.200" height="2.300" rx=".5" fill="#fff"/></svg></span><span class="x" style="left:177.2px">Borrar</span></div></td><td class="r">10</td><td class="r">1</td><td class="r">1</td><td></td><td>acp</td><td class="r">9</td><td class="r">86</td><td class="r">99</td><td>ACP_MESSAGES</td><td></td><td></td></tr>
<tr class="o"><td class="act"><div class="a"><span class="cb"></span><span class="p" style="left:31px;top:6.500px"><svg class="ic" width="16" height="15" viewBox="0 0 16 15"><g transform="rotate(-43 8 7.5) translate(8 7.5) scale(1.07 1) translate(-8 -7.5)"><path d="M-0.5 7.5l3.6-2.7v5.400z" fill="#eec48a" stroke="#b5641c" stroke-width=".9" stroke-linejoin="round"/><path d="M-0.5 7.5l1.500-1.100v2.200z" fill="#4a2c0c"/><rect x="3.1" y="4.800" width="9.600" height="5.400" fill="#f8d345" stroke="#d4861c" stroke-width=".9"/><rect x="3.600" y="5.600" width="8.800" height="1.700" fill="#fff2a0"/><path d="M12.700 4.800h2.200a1.200 1.200 0 0 1 1.200 1.200v3a1.200 1.200 0 0 1-1.200 1.200h-2.200z" fill="#f6d6c4" stroke="#d4861c" stroke-width=".9"/></g></svg></span><span class="x" style="left:52.5px">Editar</span><span class="p" style="left:92.5px;top:6px"><svg class="ic" width="15" height="16" viewBox="0 0 15 16"><rect x="0.300" y="0.500" width="5.700" height="15" fill="#cdcdcd"/><path d="M0.300 1h6v4.200M0.300 5h5.700M0.300 15h6v-4.200M0.300 11h5.700" stroke="#1a1a1a" stroke-width="1" fill="none"/><path d="M1.400 7.900L6.300 3.300V6.500H9.800V9.300H6.300V12.500z" fill="#6358d2"/><rect x="10.800" y="5.900" width="3.900" height="4.600" fill="#ffd32c"/><path d="M14.700 5.900h-4.400v4.600h4.400" stroke="#1a1a1a" stroke-width="1" fill="none"/><path d="M12.900 0.200v3.200M11.300 1.800h3.200" stroke="#5a5ad8" stroke-width="1.100"/></svg></span><span class="x" style="left:113.4px">Copiar</span><span class="p" style="left:156.5px;top:6px"><svg class="ic" width="15" height="15" viewBox="0 0 15 15"><circle cx="7.500" cy="7.500" r="7" fill="#e4584a"/><circle cx="7.500" cy="7.500" r="5.900" fill="url(#rg)" stroke="#f6b3a8" stroke-width=".6"/><rect x="3.900" y="6.300" width="7.200" height="2.300" rx=".5" fill="#fff"/></svg></span><span class="x" style="left:177.2px">Borrar</span></div></td><td class="r">11</td><td class="r">1</td><td class="r">1</td><td></td><td>acp</td><td class="r">9</td><td class="r">100</td><td class="r">109</td><td>ACP_ATTACHMENTS</td><td></td><td></td></tr>
<tr class="e"><td class="act"><div class="a"><span class="cb"></span><span class="p" style="left:31px;top:6.500px"><svg class="ic" width="16" height="15" viewBox="0 0 16 15"><g transform="rotate(-43 8 7.5) translate(8 7.5) scale(1.07 1) translate(-8 -7.5)"><path d="M-0.5 7.5l3.6-2.7v5.400z" fill="#eec48a" stroke="#b5641c" stroke-width=".9" stroke-linejoin="round"/><path d="M-0.5 7.5l1.500-1.100v2.200z" fill="#4a2c0c"/><rect x="3.1" y="4.800" width="9.600" height="5.400" fill="#f8d345" stroke="#d4861c" stroke-width=".9"/><rect x="3.600" y="5.600" width="8.800" height="1.700" fill="#fff2a0"/><path d="M12.700 4.800h2.200a1.200 1.200 0 0 1 1.200 1.200v3a1.200 1.200 0 0 1-1.200 1.200h-2.200z" fill="#f6d6c4" stroke="#d4861c" stroke-width=".9"/></g></svg></span><span class="x" style="left:52.5px">Editar</span><span class="p" style="left:92.5px;top:6px"><svg class="ic" width="15" height="16" viewBox="0 0 15 16"><rect x="0.300" y="0.500" width="5.700" height="15" fill="#cdcdcd"/><path d="M0.300 1h6v4.200M0.300 5h5.700M0.300 15h6v-4.200M0.300 11h5.700" stroke="#1a1a1a" stroke-width="1" fill="none"/><path d="M1.400 7.900L6.300 3.300V6.500H9.800V9.300H6.300V12.500z" fill="#6358d2"/><rect x="10.800" y="5.900" width="3.900" height="4.600" fill="#ffd32c"/><path d="M14.700 5.900h-4.400v4.600h4.400" stroke="#1a1a1a" stroke-width="1" fill="none"/><path d="M12.900 0.200v3.200M11.300 1.800h3.200" stroke="#5a5ad8" stroke-width="1.100"/></svg></span><span class="x" style="left:113.4px">Copiar</span><span class="p" style="left:156.5px;top:6px"><svg class="ic" width="15" height="15" viewBox="0 0 15 15"><circle cx="7.500" cy="7.500" r="7" fill="#e4584a"/><circle cx="7.500" cy="7.500" r="5.900" fill="url(#rg)" stroke="#f6b3a8" stroke-width=".6"/><rect x="3.900" y="6.300" width="7.200" height="2.300" rx=".5" fill="#fff"/></svg></span><span class="x" style="left:177.2px">Borrar</span></div></td><td class="r">12</td><td class="r">1</td><td class="r">1</td><td></td><td>acp</td><td class="r">0</td><td class="r">111</td><td class="r">168</td><td>ACP_CAT_USERGROUP</td><td></td><td></td></tr>
<tr class="o"><td class="act"><div class="a"><span class="cb"></span><span class="p" style="left:31px;top:6.500px"><svg class="ic" width="16" height="15" viewBox="0 0 16 15"><g transform="rotate(-43 8 7.5) translate(8 7.5) scale(1.07 1) translate(-8 -7.5)"><path d="M-0.5 7.5l3.6-2.7v5.400z" fill="#eec48a" stroke="#b5641c" stroke-width=".9" stroke-linejoin="round"/><path d="M-0.5 7.5l1.500-1.100v2.200z" fill="#4a2c0c"/><rect x="3.1" y="4.800" width="9.600" height="5.400" fill="#f8d345" stroke="#d4861c" stroke-width=".9"/><rect x="3.600" y="5.600" width="8.800" height="1.700" fill="#fff2a0"/><path d="M12.700 4.800h2.200a1.200 1.200 0 0 1 1.200 1.200v3a1.200 1.200 0 0 1-1.200 1.200h-2.200z" fill="#f6d6c4" stroke="#d4861c" stroke-width=".9"/></g></svg></span><span class="x" style="left:52.5px">Editar</span><span class="p" style="left:92.5px;top:6px"><svg class="ic" width="15" height="16" viewBox="0 0 15 16"><rect x="0.300" y="0.500" width="5.700" height="15" fill="#cdcdcd"/><path d="M0.300 1h6v4.200M0.300 5h5.700M0.300 15h6v-4.200M0.300 11h5.700" stroke="#1a1a1a" stroke-width="1" fill="none"/><path d="M1.400 7.900L6.300 3.300V6.500H9.800V9.300H6.300V12.500z" fill="#6358d2"/><rect x="10.800" y="5.900" width="3.900" height="4.600" fill="#ffd32c"/><path d="M14.700 5.900h-4.400v4.600h4.400" stroke="#1a1a1a" stroke-width="1" fill="none"/><path d="M12.900 0.200v3.200M11.300 1.800h3.200" stroke="#5a5ad8" stroke-width="1.100"/></svg></span><span class="x" style="left:113.4px">Copiar</span><span class="p" style="left:156.5px;top:6px"><svg class="ic" width="15" height="15" viewBox="0 0 15 15"><circle cx="7.500" cy="7.500" r="7" fill="#e4584a"/><circle cx="7.500" cy="7.500" r="5.900" fill="url(#rg)" stroke="#f6b3a8" stroke-width=".6"/><rect x="3.900" y="6.300" width="7.200" height="2.300" rx=".5" fill="#fff"/></svg></span><span class="x" style="left:177.2px">Borrar</span></div></td><td class="r">13</td><td class="r">1</td><td class="r">1</td><td></td><td>acp</td><td class="r">12</td><td class="r">112</td><td class="r">145</td><td>ACP_CAT_USERS</td><td></td><td></td></tr>
<tr class="e"><td class="act"><div class="a"><span class="cb"></span><span class="p" style="left:31px;top:6.500px"><svg class="ic" width="16" height="15" viewBox="0 0 16 15"><g transform="rotate(-43 8 7.5) translate(8 7.5) scale(1.07 1) translate(-8 -7.5)"><path d="M-0.5 7.5l3.6-2.7v5.400z" fill="#eec48a" stroke="#b5641c" stroke-width=".9" stroke-linejoin="round"/><path d="M-0.5 7.5l1.500-1.100v2.200z" fill="#4a2c0c"/><rect x="3.1" y="4.800" width="9.600" height="5.400" fill="#f8d345" stroke="#d4861c" stroke-width=".9"/><rect x="3.600" y="5.600" width="8.800" height="1.700" fill="#fff2a0"/><path d="M12.700 4.800h2.200a1.200 1.200 0 0 1 1.200 1.200v3a1.200 1.200 0 0 1-1.200 1.200h-2.200z" fill="#f6d6c4" stroke="#d4861c" stroke-width=".9"/></g></svg></span><span class="x" style="left:52.5px">Editar</span><span class="p" style="left:92.5px;top:6px"><svg class="ic" width="15" height="16" viewBox="0 0 15 16"><rect x="0.300" y="0.500" width="5.700" height="15" fill="#cdcdcd"/><path d="M0.300 1h6v4.200M0.300 5h5.700M0.300 15h6v-4.200M0.300 11h5.700" stroke="#1a1a1a" stroke-width="1" fill="none"/><path d="M1.400 7.900L6.300 3.300V6.500H9.800V9.300H6.300V12.500z" fill="#6358d2"/><rect x="10.800" y="5.900" width="3.900" height="4.600" fill="#ffd32c"/><path d="M14.700 5.900h-4.400v4.600h4.400" stroke="#1a1a1a" stroke-width="1" fill="none"/><path d="M12.900 0.200v3.200M11.300 1.800h3.200" stroke="#5a5ad8" stroke-width="1.100"/></svg></span><span class="x" style="left:113.4px">Copiar</span><span class="p" style="left:156.5px;top:6px"><svg class="ic" width="15" height="15" viewBox="0 0 15 15"><circle cx="7.500" cy="7.500" r="7" fill="#e4584a"/><circle cx="7.500" cy="7.500" r="5.900" fill="url(#rg)" stroke="#f6b3a8" stroke-width=".6"/><rect x="3.900" y="6.300" width="7.200" height="2.300" rx=".5" fill="#fff"/></svg></span><span class="x" style="left:177.2px">Borrar</span></div></td><td class="r">14</td><td class="r">1</td><td class="r">1</td><td></td><td>acp</td><td class="r">12</td><td class="r">146</td><td class="r">155</td><td>ACP_GROUPS</td><td></td><td></td></tr>
<tr class="o"><td class="act"><div class="a"><span class="cb"></span><span class="p" style="left:31px;top:6.500px"><svg class="ic" width="16" height="15" viewBox="0 0 16 15"><g transform="rotate(-43 8 7.5) translate(8 7.5) scale(1.07 1) translate(-8 -7.5)"><path d="M-0.5 7.5l3.6-2.7v5.400z" fill="#eec48a" stroke="#b5641c" stroke-width=".9" stroke-linejoin="round"/><path d="M-0.5 7.5l1.500-1.100v2.200z" fill="#4a2c0c"/><rect x="3.1" y="4.800" width="9.600" height="5.400" fill="#f8d345" stroke="#d4861c" stroke-width=".9"/><rect x="3.600" y="5.600" width="8.800" height="1.700" fill="#fff2a0"/><path d="M12.700 4.800h2.200a1.200 1.200 0 0 1 1.200 1.200v3a1.200 1.200 0 0 1-1.200 1.200h-2.200z" fill="#f6d6c4" stroke="#d4861c" stroke-width=".9"/></g></svg></span><span class="x" style="left:52.5px">Editar</span><span class="p" style="left:92.5px;top:6px"><svg class="ic" width="15" height="16" viewBox="0 0 15 16"><rect x="0.300" y="0.500" width="5.700" height="15" fill="#cdcdcd"/><path d="M0.300 1h6v4.200M0.300 5h5.700M0.300 15h6v-4.200M0.300 11h5.700" stroke="#1a1a1a" stroke-width="1" fill="none"/><path d="M1.400 7.900L6.300 3.300V6.500H9.800V9.300H6.300V12.500z" fill="#6358d2"/><rect x="10.800" y="5.900" width="3.900" height="4.600" fill="#ffd32c"/><path d="M14.700 5.900h-4.400v4.600h4.400" stroke="#1a1a1a" stroke-width="1" fill="none"/><path d="M12.900 0.200v3.200M11.300 1.800h3.200" stroke="#5a5ad8" stroke-width="1.100"/></svg></span><span class="x" style="left:113.4px">Copiar</span><span class="p" style="left:156.5px;top:6px"><svg class="ic" width="15" height="15" viewBox="0 0 15 15"><circle cx="7.500" cy="7.500" r="7" fill="#e4584a"/><circle cx="7.500" cy="7.500" r="5.900" fill="url(#rg)" stroke="#f6b3a8" stroke-width=".6"/><rect x="3.900" y="6.300" width="7.200" height="2.300" rx=".5" fill="#fff"/></svg></span><span class="x" style="left:177.2px">Borrar</span></div></td><td class="r">15</td><td class="r">1</td><td class="r">1</td><td></td><td>acp</td><td class="r">12</td><td class="r">156</td><td class="r">167</td><td>ACP_USER_SECURITY</td><td></td><td></td></tr>
<tr class="e"><td class="act"><div class="a"><span class="cb"></span><span class="p" style="left:31px;top:6.500px"><svg class="ic" width="16" height="15" viewBox="0 0 16 15"><g transform="rotate(-43 8 7.5) translate(8 7.5) scale(1.07 1) translate(-8 -7.5)"><path d="M-0.5 7.5l3.6-2.7v5.400z" fill="#eec48a" stroke="#b5641c" stroke-width=".9" stroke-linejoin="round"/><path d="M-0.5 7.5l1.500-1.100v2.200z" fill="#4a2c0c"/><rect x="3.1" y="4.800" width="9.600" height="5.400" fill="#f8d345" stroke="#d4861c" stroke-width=".9"/><rect x="3.600" y="5.600" width="8.800" height="1.700" fill="#fff2a0"/><path d="M12.700 4.800h2.200a1.200 1.200 0 0 1 1.200 1.200v3a1.200 1.200 0 0 1-1.200 1.200h-2.200z" fill="#f6d6c4" stroke="#d4861c" stroke-width=".9"/></g></svg></span><span class="x" style="left:52.5px">Editar</span><span class="p" style="left:92.5px;top:6px"><svg class="ic" width="15" height="16" viewBox="0 0 15 16"><rect x="0.300" y="0.500" width="5.700" height="15" fill="#cdcdcd"/><path d="M0.300 1h6v4.200M0.300 5h5.700M0.300 15h6v-4.200M0.300 11h5.700" stroke="#1a1a1a" stroke-width="1" fill="none"/><path d="M1.400 7.900L6.300 3.300V6.500H9.800V9.300H6.300V12.500z" fill="#6358d2"/><rect x="10.800" y="5.900" width="3.900" height="4.600" fill="#ffd32c"/><path d="M14.700 5.900h-4.400v4.600h4.400" stroke="#1a1a1a" stroke-width="1" fill="none"/><path d="M12.900 0.200v3.200M11.300 1.800h3.200" stroke="#5a5ad8" stroke-width="1.100"/></svg></span><span class="x" style="left:113.4px">Copiar</span><span class="p" style="left:156.5px;top:6px"><svg class="ic" width="15" height="15" viewBox="0 0 15 15"><circle cx="7.500" cy="7.500" r="7" fill="#e4584a"/><circle cx="7.500" cy="7.500" r="5.900" fill="url(#rg)" stroke="#f6b3a8" stroke-width=".6"/><rect x="3.900" y="6.300" width="7.200" height="2.300" rx=".5" fill="#fff"/></svg></span><span class="x" style="left:177.2px">Borrar</span></div></td><td class="r">16</td><td class="r">1</td><td class="r">1</td><td></td><td>acp</td><td class="r">0</td><td class="r">169</td><td class="r">218</td><td>ACP_CAT_PERMISSIONS</td><td></td><td></td></tr>
<tr class="o"><td class="act"><div class="a"><span class="cb"></span><span class="p" style="left:31px;top:6.500px"><svg class="ic" width="16" height="15" viewBox="0 0 16 15"><g transform="rotate(-43 8 7.5) translate(8 7.5) scale(1.07 1) translate(-8 -7.5)"><path d="M-0.5 7.5l3.6-2.7v5.400z" fill="#eec48a" stroke="#b5641c" stroke-width=".9" stroke-linejoin="round"/><path d="M-0.5 7.5l1.500-1.100v2.200z" fill="#4a2c0c"/><rect x="3.1" y="4.800" width="9.600" height="5.400" fill="#f8d345" stroke="#d4861c" stroke-width=".9"/><rect x="3.600" y="5.600" width="8.800" height="1.700" fill="#fff2a0"/><path d="M12.700 4.800h2.200a1.200 1.200 0 0 1 1.200 1.200v3a1.200 1.200 0 0 1-1.200 1.200h-2.200z" fill="#f6d6c4" stroke="#d4861c" stroke-width=".9"/></g></svg></span><span class="x" style="left:52.5px">Editar</span><span class="p" style="left:92.5px;top:6px"><svg class="ic" width="15" height="16" viewBox="0 0 15 16"><rect x="0.300" y="0.500" width="5.700" height="15" fill="#cdcdcd"/><path d="M0.300 1h6v4.200M0.300 5h5.700M0.300 15h6v-4.200M0.300 11h5.700" stroke="#1a1a1a" stroke-width="1" fill="none"/><path d="M1.400 7.900L6.300 3.300V6.500H9.800V9.300H6.300V12.500z" fill="#6358d2"/><rect x="10.800" y="5.900" width="3.900" height="4.600" fill="#ffd32c"/><path d="M14.700 5.900h-4.400v4.600h4.400" stroke="#1a1a1a" stroke-width="1" fill="none"/><path d="M12.900 0.200v3.200M11.300 1.800h3.200" stroke="#5a5ad8" stroke-width="1.100"/></svg></span><span class="x" style="left:113.4px">Copiar</span><span class="p" style="left:156.5px;top:6px"><svg class="ic" width="15" height="15" viewBox="0 0 15 15"><circle cx="7.500" cy="7.500" r="7" fill="#e4584a"/><circle cx="7.500" cy="7.500" r="5.900" fill="url(#rg)" stroke="#f6b3a8" stroke-width=".6"/><rect x="3.900" y="6.300" width="7.200" height="2.300" rx=".5" fill="#fff"/></svg></span><span class="x" style="left:177.2px">Borrar</span></div></td><td class="r">17</td><td class="r">1</td><td class="r">1</td><td></td><td>acp</td><td class="r">16</td><td class="r">172</td><td class="r">181</td><td>ACP_GLOBAL_PERMISSIONS</td><td></td><td></td></tr>
<tr class="e"><td class="act"><div class="a"><span class="cb"></span><span class="p" style="left:31px;top:6.500px"><svg class="ic" width="16" height="15" viewBox="0 0 16 15"><g transform="rotate(-43 8 7.5) translate(8 7.5) scale(1.07 1) translate(-8 -7.5)"><path d="M-0.5 7.5l3.6-2.7v5.400z" fill="#eec48a" stroke="#b5641c" stroke-width=".9" stroke-linejoin="round"/><path d="M-0.5 7.5l1.500-1.100v2.200z" fill="#4a2c0c"/><rect x="3.1" y="4.800" width="9.600" height="5.400" fill="#f8d345" stroke="#d4861c" stroke-width=".9"/><rect x="3.600" y="5.600" width="8.800" height="1.700" fill="#fff2a0"/><path d="M12.700 4.800h2.200a1.200 1.200 0 0 1 1.200 1.200v3a1.200 1.200 0 0 1-1.200 1.200h-2.200z" fill="#f6d6c4" stroke="#d4861c" stroke-width=".9"/></g></svg></span><span class="x" style="left:52.5px">Editar</span><span class="p" style="left:92.5px;top:6px"><svg class="ic" width="15" height="16" viewBox="0 0 15 16"><rect x="0.300" y="0.500" width="5.700" height="15" fill="#cdcdcd"/><path d="M0.300 1h6v4.200M0.300 5h5.700M0.300 15h6v-4.200M0.300 11h5.700" stroke="#1a1a1a" stroke-width="1" fill="none"/><path d="M1.400 7.900L6.300 3.300V6.500H9.800V9.300H6.300V12.500z" fill="#6358d2"/><rect x="10.800" y="5.900" width="3.900" height="4.600" fill="#ffd32c"/><path d="M14.700 5.900h-4.400v4.600h4.400" stroke="#1a1a1a" stroke-width="1" fill="none"/><path d="M12.900 0.200v3.200M11.300 1.800h3.200" stroke="#5a5ad8" stroke-width="1.100"/></svg></span><span class="x" style="left:113.4px">Copiar</span><span class="p" style="left:156.5px;top:6px"><svg class="ic" width="15" height="15" viewBox="0 0 15 15"><circle cx="7.500" cy="7.500" r="7" fill="#e4584a"/><circle cx="7.500" cy="7.500" r="5.900" fill="url(#rg)" stroke="#f6b3a8" stroke-width=".6"/><rect x="3.900" y="6.300" width="7.200" height="2.300" rx=".5" fill="#fff"/></svg></span><span class="x" style="left:177.2px">Borrar</span></div></td><td class="r">18</td><td class="r">1</td><td class="r">1</td><td></td><td>acp</td><td class="r">16</td><td class="r">182</td><td class="r">193</td><td>ACP_FORUM_BASED_PERMISSIONS</td><td></td><td></td></tr>
<tr class="o"><td class="act"><div class="a"><span class="cb"></span><span class="p" style="left:31px;top:6.500px"><svg class="ic" width="16" height="15" viewBox="0 0 16 15"><g transform="rotate(-43 8 7.5) translate(8 7.5) scale(1.07 1) translate(-8 -7.5)"><path d="M-0.5 7.5l3.6-2.7v5.400z" fill="#eec48a" stroke="#b5641c" stroke-width=".9" stroke-linejoin="round"/><path d="M-0.5 7.5l1.500-1.100v2.200z" fill="#4a2c0c"/><rect x="3.1" y="4.800" width="9.600" height="5.400" fill="#f8d345" stroke="#d4861c" stroke-width=".9"/><rect x="3.600" y="5.600" width="8.800" height="1.700" fill="#fff2a0"/><path d="M12.700 4.800h2.200a1.200 1.200 0 0 1 1.200 1.200v3a1.200 1.200 0 0 1-1.200 1.200h-2.200z" fill="#f6d6c4" stroke="#d4861c" stroke-width=".9"/></g></svg></span><span class="x" style="left:52.5px">Editar</span><span class="p" style="left:92.5px;top:6px"><svg class="ic" width="15" height="16" viewBox="0 0 15 16"><rect x="0.300" y="0.500" width="5.700" height="15" fill="#cdcdcd"/><path d="M0.300 1h6v4.200M0.300 5h5.700M0.300 15h6v-4.200M0.300 11h5.700" stroke="#1a1a1a" stroke-width="1" fill="none"/><path d="M1.400 7.900L6.300 3.300V6.500H9.800V9.300H6.300V12.500z" fill="#6358d2"/><rect x="10.800" y="5.900" width="3.900" height="4.600" fill="#ffd32c"/><path d="M14.700 5.900h-4.400v4.600h4.400" stroke="#1a1a1a" stroke-width="1" fill="none"/><path d="M12.900 0.200v3.200M11.300 1.800h3.200" stroke="#5a5ad8" stroke-width="1.100"/></svg></span><span class="x" style="left:113.4px">Copiar</span><span class="p" style="left:156.5px;top:6px"><svg class="ic" width="15" height="15" viewBox="0 0 15 15"><circle cx="7.500" cy="7.500" r="7" fill="#e4584a"/><circle cx="7.500" cy="7.500" r="5.900" fill="url(#rg)" stroke="#f6b3a8" stroke-width=".6"/><rect x="3.900" y="6.300" width="7.200" height="2.300" rx=".5" fill="#fff"/></svg></span><span class="x" style="left:177.2px">Borrar</span></div></td><td class="r">19</td><td class="r">1</td><td class="r">1</td><td></td><td>acp</td><td class="r">16</td><td class="r">194</td><td class="r">203</td><td>ACP_PERMISSION_ROLES</td><td></td><td></td></tr>
<tr class="e"><td class="act"><div class="a"><span class="cb"></span><span class="p" style="left:31px;top:6.500px"><svg class="ic" width="16" height="15" viewBox="0 0 16 15"><g transform="rotate(-43 8 7.5) translate(8 7.5) scale(1.07 1) translate(-8 -7.5)"><path d="M-0.5 7.5l3.6-2.7v5.400z" fill="#eec48a" stroke="#b5641c" stroke-width=".9" stroke-linejoin="round"/><path d="M-0.5 7.5l1.500-1.100v2.200z" fill="#4a2c0c"/><rect x="3.1" y="4.800" width="9.600" height="5.400" fill="#f8d345" stroke="#d4861c" stroke-width=".9"/><rect x="3.600" y="5.600" width="8.800" height="1.700" fill="#fff2a0"/><path d="M12.700 4.800h2.200a1.200 1.200 0 0 1 1.200 1.200v3a1.200 1.200 0 0 1-1.200 1.200h-2.200z" fill="#f6d6c4" stroke="#d4861c" stroke-width=".9"/></g></svg></span><span class="x" style="left:52.5px">Editar</span><span class="p" style="left:92.5px;top:6px"><svg class="ic" width="15" height="16" viewBox="0 0 15 16"><rect x="0.300" y="0.500" width="5.700" height="15" fill="#cdcdcd"/><path d="M0.300 1h6v4.200M0.300 5h5.700M0.300 15h6v-4.200M0.300 11h5.700" stroke="#1a1a1a" stroke-width="1" fill="none"/><path d="M1.400 7.900L6.300 3.300V6.500H9.800V9.300H6.300V12.500z" fill="#6358d2"/><rect x="10.800" y="5.900" width="3.900" height="4.600" fill="#ffd32c"/><path d="M14.700 5.900h-4.400v4.600h4.400" stroke="#1a1a1a" stroke-width="1" fill="none"/><path d="M12.900 0.200v3.200M11.300 1.800h3.200" stroke="#5a5ad8" stroke-width="1.100"/></svg></span><span class="x" style="left:113.4px">Copiar</span><span class="p" style="left:156.5px;top:6px"><svg class="ic" width="15" height="15" viewBox="0 0 15 15"><circle cx="7.500" cy="7.500" r="7" fill="#e4584a"/><circle cx="7.500" cy="7.500" r="5.900" fill="url(#rg)" stroke="#f6b3a8" stroke-width=".6"/><rect x="3.900" y="6.300" width="7.200" height="2.300" rx=".5" fill="#fff"/></svg></span><span class="x" style="left:177.2px">Borrar</span></div></td><td class="r">20</td><td class="r">1</td><td class="r">1</td><td></td><td>acp</td><td class="r">16</td><td class="r">204</td><td class="r">217</td><td>ACP_PERMISSION_MASKS</td><td></td><td></td></tr>
<tr class="o"><td class="act"><div class="a"><span class="cb"></span><span class="p" style="left:31px;top:6.500px"><svg class="ic" width="16" height="15" viewBox="0 0 16 15"><g transform="rotate(-43 8 7.5) translate(8 7.5) scale(1.07 1) translate(-8 -7.5)"><path d="M-0.5 7.5l3.6-2.7v5.400z" fill="#eec48a" stroke="#b5641c" stroke-width=".9" stroke-linejoin="round"/><path d="M-0.5 7.5l1.500-1.100v2.200z" fill="#4a2c0c"/><rect x="3.1" y="4.800" width="9.600" height="5.400" fill="#f8d345" stroke="#d4861c" stroke-width=".9"/><rect x="3.600" y="5.600" width="8.800" height="1.700" fill="#fff2a0"/><path d="M12.700 4.800h2.200a1.200 1.200 0 0 1 1.200 1.200v3a1.200 1.200 0 0 1-1.200 1.200h-2.200z" fill="#f6d6c4" stroke="#d4861c" stroke-width=".9"/></g></svg></span><span class="x" style="left:52.5px">Editar</span><span class="p" style="left:92.5px;top:6px"><svg class="ic" width="15" height="16" viewBox="0 0 15 16"><rect x="0.300" y="0.500" width="5.700" height="15" fill="#cdcdcd"/><path d="M0.300 1h6v4.200M0.300 5h5.700M0.300 15h6v-4.200M0.300 11h5.700" stroke="#1a1a1a" stroke-width="1" fill="none"/><path d="M1.400 7.900L6.300 3.300V6.500H9.800V9.300H6.300V12.500z" fill="#6358d2"/><rect x="10.800" y="5.900" width="3.900" height="4.600" fill="#ffd32c"/><path d="M14.700 5.900h-4.400v4.600h4.400" stroke="#1a1a1a" stroke-width="1" fill="none"/><path d="M12.900 0.200v3.200M11.300 1.800h3.200" stroke="#5a5ad8" stroke-width="1.100"/></svg></span><span class="x" style="left:113.4px">Copiar</span><span class="p" style="left:156.5px;top:6px"><svg class="ic" width="15" height="15" viewBox="0 0 15 15"><circle cx="7.500" cy="7.500" r="7" fill="#e4584a"/><circle cx="7.500" cy="7.500" r="5.900" fill="url(#rg)" stroke="#f6b3a8" stroke-width=".6"/><rect x="3.900" y="6.300" width="7.200" height="2.300" rx=".5" fill="#fff"/></svg></span><span class="x" style="left:177.2px">Borrar</span></div></td><td class="r">21</td><td class="r">1</td><td class="r">1</td><td></td><td>acp</td><td class="r">0</td><td class="r">219</td><td class="r">232</td><td>ACP_CAT_STYLES</td><td></td><td></td></tr>
<tr class="e"><td class="act"><div class="a"><span class="cb"></span><span class="p" style="left:31px;top:6.500px"><svg class="ic" width="16" height="15" viewBox="0 0 16 15"><g transform="rotate(-43 8 7.5) translate(8 7.5) scale(1.07 1) translate(-8 -7.5)"><path d="M-0.5 7.5l3.6-2.7v5.400z" fill="#eec48a" stroke="#b5641c" stroke-width=".9" stroke-linejoin="round"/><path d="M-0.5 7.5l1.500-1.100v2.200z" fill="#4a2c0c"/><rect x="3.1" y="4.800" width="9.600" height="5.400" fill="#f8d345" stroke="#d4861c" stroke-width=".9"/><rect x="3.600" y="5.600" width="8.800" height="1.700" fill="#fff2a0"/><path d="M12.700 4.800h2.200a1.200 1.200 0 0 1 1.200 1.200v3a1.200 1.200 0 0 1-1.200 1.200h-2.200z" fill="#f6d6c4" stroke="#d4861c" stroke-width=".9"/></g></svg></span><span class="x" style="left:52.5px">Editar</span><span class="p" style="left:92.5px;top:6px"><svg class="ic" width="15" height="16" viewBox="0 0 15 16"><rect x="0.300" y="0.500" width="5.700" height="15" fill="#cdcdcd"/><path d="M0.300 1h6v4.200M0.300 5h5.700M0.300 15h6v-4.200M0.300 11h5.700" stroke="#1a1a1a" stroke-width="1" fill="none"/><path d="M1.400 7.900L6.300 3.300V6.500H9.800V9.300H6.300V12.500z" fill="#6358d2"/><rect x="10.800" y="5.900" width="3.900" height="4.600" fill="#ffd32c"/><path d="M14.700 5.900h-4.400v4.600h4.400" stroke="#1a1a1a" stroke-width="1" fill="none"/><path d="M12.900 0.200v3.200M11.300 1.800h3.200" stroke="#5a5ad8" stroke-width="1.100"/></svg></span><span class="x" style="left:113.4px">Copiar</span><span class="p" style="left:156.5px;top:6px"><svg class="ic" width="15" height="15" viewBox="0 0 15 15"><circle cx="7.500" cy="7.500" r="7" fill="#e4584a"/><circle cx="7.500" cy="7.500" r="5.900" fill="url(#rg)" stroke="#f6b3a8" stroke-width=".6"/><rect x="3.900" y="6.300" width="7.200" height="2.300" rx=".5" fill="#fff"/></svg></span><span class="x" style="left:177.2px">Borrar</span></div></td><td class="r">22</td><td class="r">1</td><td class="r">1</td><td></td><td>acp</td><td class="r">21</td><td class="r">220</td><td class="r">223</td><td>ACP_STYLE_MANAGEMENT</td><td></td><td></td></tr>
<tr class="o"><td class="act"><div class="a"><span class="cb"></span><span class="p" style="left:31px;top:6.500px"><svg class="ic" width="16" height="15" viewBox="0 0 16 15"><g transform="rotate(-43 8 7.5) translate(8 7.5) scale(1.07 1) translate(-8 -7.5)"><path d="M-0.5 7.5l3.6-2.7v5.400z" fill="#eec48a" stroke="#b5641c" stroke-width=".9" stroke-linejoin="round"/><path d="M-0.5 7.5l1.500-1.100v2.200z" fill="#4a2c0c"/><rect x="3.1" y="4.800" width="9.600" height="5.400" fill="#f8d345" stroke="#d4861c" stroke-width=".9"/><rect x="3.600" y="5.600" width="8.800" height="1.700" fill="#fff2a0"/><path d="M12.700 4.800h2.200a1.200 1.200 0 0 1 1.200 1.200v3a1.200 1.200 0 0 1-1.200 1.200h-2.200z" fill="#f6d6c4" stroke="#d4861c" stroke-width=".9"/></g></svg></span><span class="x" style="left:52.5px">Editar</span><span class="p" style="left:92.5px;top:6px"><svg class="ic" width="15" height="16" viewBox="0 0 15 16"><rect x="0.300" y="0.500" width="5.700" height="15" fill="#cdcdcd"/><path d="M0.300 1h6v4.200M0.300 5h5.700M0.300 15h6v-4.200M0.300 11h5.700" stroke="#1a1a1a" stroke-width="1" fill="none"/><path d="M1.400 7.900L6.300 3.300V6.500H9.800V9.300H6.300V12.500z" fill="#6358d2"/><rect x="10.800" y="5.900" width="3.900" height="4.600" fill="#ffd32c"/><path d="M14.700 5.900h-4.400v4.600h4.400" stroke="#1a1a1a" stroke-width="1" fill="none"/><path d="M12.900 0.200v3.200M11.300 1.800h3.200" stroke="#5a5ad8" stroke-width="1.100"/></svg></span><span class="x" style="left:113.4px">Copiar</span><span class="p" style="left:156.5px;top:6px"><svg class="ic" width="15" height="15" viewBox="0 0 15 15"><circle cx="7.500" cy="7.500" r="7" fill="#e4584a"/><circle cx="7.500" cy="7.500" r="5.900" fill="url(#rg)" stroke="#f6b3a8" stroke-width=".6"/><rect x="3.900" y="6.300" width="7.200" height="2.300" rx=".5" fill="#fff"/></svg></span><span class="x" style="left:177.2px">Borrar</span></div></td><td class="r">23</td><td class="r">1</td><td class="r">1</td><td></td><td>acp</td><td class="r">21</td><td class="r">224</td><td class="r">231</td><td>ACP_STYLE_COMPONENTS</td><td></td><td></td></tr>
<tr class="e"><td class="act"><div class="a"><span class="cb"></span><span class="p" style="left:31px;top:6.500px"><svg class="ic" width="16" height="15" viewBox="0 0 16 15"><g transform="rotate(-43 8 7.5) translate(8 7.5) scale(1.07 1) translate(-8 -7.5)"><path d="M-0.5 7.5l3.6-2.7v5.400z" fill="#eec48a" stroke="#b5641c" stroke-width=".9" stroke-linejoin="round"/><path d="M-0.5 7.5l1.500-1.100v2.200z" fill="#4a2c0c"/><rect x="3.1" y="4.800" width="9.600" height="5.400" fill="#f8d345" stroke="#d4861c" stroke-width=".9"/><rect x="3.600" y="5.600" width="8.800" height="1.700" fill="#fff2a0"/><path d="M12.700 4.800h2.200a1.200 1.200 0 0 1 1.200 1.200v3a1.200 1.200 0 0 1-1.200 1.200h-2.200z" fill="#f6d6c4" stroke="#d4861c" stroke-width=".9"/></g></svg></span><span class="x" style="left:52.5px">Editar</span><span class="p" style="left:92.5px;top:6px"><svg class="ic" width="15" height="16" viewBox="0 0 15 16"><rect x="0.300" y="0.500" width="5.700" height="15" fill="#cdcdcd"/><path d="M0.300 1h6v4.200M0.300 5h5.700M0.300 15h6v-4.200M0.300 11h5.700" stroke="#1a1a1a" stroke-width="1" fill="none"/><path d="M1.400 7.900L6.300 3.300V6.500H9.800V9.300H6.300V12.500z" fill="#6358d2"/><rect x="10.800" y="5.900" width="3.900" height="4.600" fill="#ffd32c"/><path d="M14.700 5.900h-4.400v4.600h4.400" stroke="#1a1a1a" stroke-width="1" fill="none"/><path d="M12.900 0.200v3.200M11.300 1.800h3.200" stroke="#5a5ad8" stroke-width="1.100"/></svg></span><span class="x" style="left:113.4px">Copiar</span><span class="p" style="left:156.5px;top:6px"><svg class="ic" width="15" height="15" viewBox="0 0 15 15"><circle cx="7.500" cy="7.500" r="7" fill="#e4584a"/><circle cx="7.500" cy="7.500" r="5.900" fill="url(#rg)" stroke="#f6b3a8" stroke-width=".6"/><rect x="3.900" y="6.300" width="7.200" height="2.300" rx=".5" fill="#fff"/></svg></span><span class="x" style="left:177.2px">Borrar</span></div></td><td class="r">24</td><td class="r">1</td><td class="r">1</td><td></td><td>acp</td><td class="r">0</td><td class="r">233</td><td class="r">254</td><td>ACP_CAT_MAINTENANCE</td><td></td><td></td></tr>
<tr class="o"><td class="act"><div class="a"><span class="cb"></span><span class="p" style="left:31px;top:6.500px"><svg class="ic" width="16" height="15" viewBox="0 0 16 15"><g transform="rotate(-43 8 7.5) translate(8 7.5) scale(1.07 1) translate(-8 -7.5)"><path d="M-0.5 7.5l3.6-2.7v5.400z" fill="#eec48a" stroke="#b5641c" stroke-width=".9" stroke-linejoin="round"/><path d="M-0.5 7.5l1.500-1.100v2.200z" fill="#4a2c0c"/><rect x="3.1" y="4.800" width="9.600" height="5.400" fill="#f8d345" stroke="#d4861c" stroke-width=".9"/><rect x="3.600" y="5.600" width="8.800" height="1.700" fill="#fff2a0"/><path d="M12.700 4.800h2.200a1.200 1.200 0 0 1 1.200 1.200v3a1.200 1.200 0 0 1-1.200 1.200h-2.200z" fill="#f6d6c4" stroke="#d4861c" stroke-width=".9"/></g></svg></span><span class="x" style="left:52.5px">Editar</span><span class="p" style="left:92.5px;top:6px"><svg class="ic" width="15" height="16" viewBox="0 0 15 16"><rect x="0.300" y="0.500" width="5.700" height="15" fill="#cdcdcd"/><path d="M0.300 1h6v4.200M0.300 5h5.700M0.300 15h6v-4.200M0.300 11h5.700" stroke="#1a1a1a" stroke-width="1" fill="none"/><path d="M1.400 7.900L6.300 3.300V6.500H9.800V9.300H6.300V12.500z" fill="#6358d2"/><rect x="10.800" y="5.900" width="3.900" height="4.600" fill="#ffd32c"/><path d="M14.700 5.900h-4.400v4.600h4.400" stroke="#1a1a1a" stroke-width="1" fill="none"/><path d="M12.900 0.200v3.200M11.300 1.800h3.200" stroke="#5a5ad8" stroke-width="1.100"/></svg></span><span class="x" style="left:113.4px">Copiar</span><span class="p" style="left:156.5px;top:6px"><svg class="ic" width="15" height="15" viewBox="0 0 15 15"><circle cx="7.500" cy="7.500" r="7" fill="#e4584a"/><circle cx="7.500" cy="7.500" r="5.900" fill="url(#rg)" stroke="#f6b3a8" stroke-width=".6"/><rect x="3.900" y="6.300" width="7.200" height="2.300" rx=".5" fill="#fff"/></svg></span><span class="x" style="left:177.2px">Borrar</span></div></td><td class="r">25</td><td class="r">1</td><td class="r">1</td><td></td><td>acp</td><td class="r">24</td><td class="r">234</td><td class="r">245</td><td>ACP_FORUM_LOGS</td><td></td><td></td></tr>
<tr class="e"><td class="act"><div class="a"><span class="cb"></span><span class="p" style="left:31px;top:6.500px"><svg class="ic" width="16" height="15" viewBox="0 0 16 15"><g transform="rotate(-43 8 7.5) translate(8 7.5) scale(1.07 1) translate(-8 -7.5)"><path d="M-0.5 7.5l3.6-2.7v5.400z" fill="#eec48a" stroke="#b5641c" stroke-width=".9" stroke-linejoin="round"/><path d="M-0.5 7.5l1.500-1.100v2.200z" fill="#4a2c0c"/><rect x="3.1" y="4.800" width="9.600" height="5.400" fill="#f8d345" stroke="#d4861c" stroke-width=".9"/><rect x="3.600" y="5.600" width="8.800" height="1.700" fill="#fff2a0"/><path d="M12.700 4.800h2.200a1.200 1.200 0 0 1 1.200 1.200v3a1.200 1.200 0 0 1-1.200 1.200h-2.200z" fill="#f6d6c4" stroke="#d4861c" stroke-width=".9"/></g></svg></span><span class="x" style="left:52.5px">Editar</span><span class="p" style="left:92.5px;top:6px"><svg class="ic" width="15" height="16" viewBox="0 0 15 16"><rect x="0.300" y="0.500" width="5.700" height="15" fill="#cdcdcd"/><path d="M0.300 1h6v4.200M0.300 5h5.700M0.300 15h6v-4.200M0.300 11h5.700" stroke="#1a1a1a" stroke-width="1" fill="none"/><path d="M1.400 7.900L6.300 3.300V6.500H9.800V9.300H6.300V12.500z" fill="#6358d2"/><rect x="10.800" y="5.900" width="3.900" height="4.600" fill="#ffd32c"/><path d="M14.700 5.900h-4.400v4.600h4.400" stroke="#1a1a1a" stroke-width="1" fill="none"/><path d="M12.900 0.200v3.200M11.300 1.800h3.200" stroke="#5a5ad8" stroke-width="1.100"/></svg></span><span class="x" style="left:113.4px">Copiar</span><span class="p" style="left:156.5px;top:6px"><svg class="ic" width="15" height="15" viewBox="0 0 15 15"><circle cx="7.500" cy="7.500" r="7" fill="#e4584a"/><circle cx="7.500" cy="7.500" r="5.900" fill="url(#rg)" stroke="#f6b3a8" stroke-width=".6"/><rect x="3.900" y="6.300" width="7.200" height="2.300" rx=".5" fill="#fff"/></svg></span><span class="x" style="left:177.2px">Borrar</span></div></td><td class="r">26</td><td class="r">1</td><td class="r">1</td><td></td><td>acp</td><td class="r">24</td><td class="r">246</td><td class="r">253</td><td>ACP_CAT_DATABASE</td><td></td><td></td></tr>
</table>
</div>
<div id="status">www.3eagro.com.ar:2082/3rdparty/phpMyAdmin/import.php?db=eagrocom_muleto&amp;table=phpbb_modules&amp;sql_query=EXPLAIN+SELECT…</div>
</body></html>
